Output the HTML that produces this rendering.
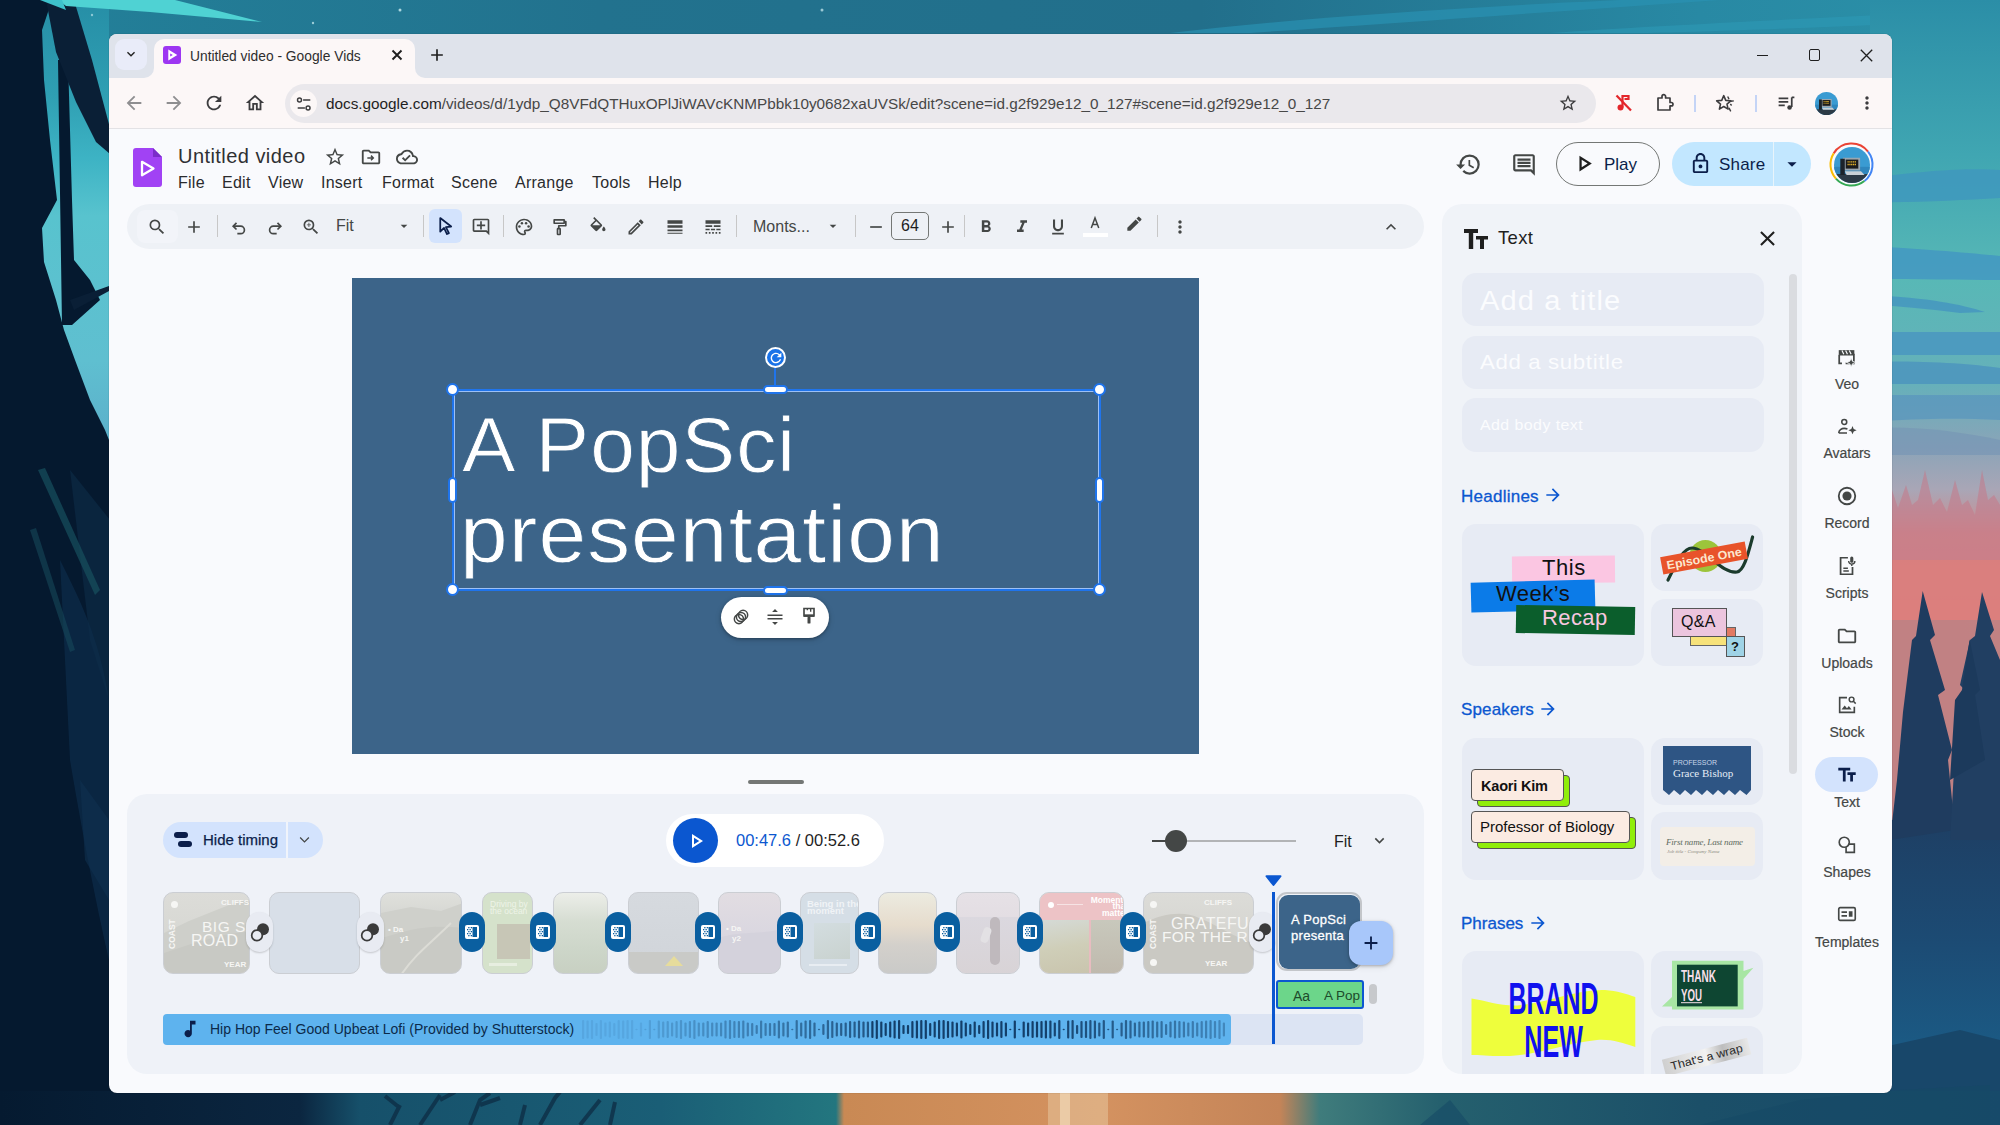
<!DOCTYPE html>
<html><head><meta charset="utf-8">
<style>
*{box-sizing:border-box}
html,body{margin:0;padding:0}
body{width:2000px;height:1125px;overflow:hidden;position:relative;font-family:"Liberation Sans",sans-serif;background:#1c6a86}
.a{position:absolute}
svg.i{position:absolute;overflow:visible}
.t{position:absolute;white-space:nowrap;line-height:1}
</style></head><body>
<!-- WALLPAPER -->
<svg class="a" style="left:0;top:0" width="2000" height="1125" viewBox="0 0 2000 1125">
<defs>
<linearGradient id="topg" x1="0" y1="0" x2="1" y2="0">
<stop offset="0" stop-color="#23819a"/><stop offset="0.3" stop-color="#22728e"/><stop offset="0.6" stop-color="#226f8b"/><stop offset="0.85" stop-color="#2889a4"/><stop offset="1" stop-color="#2b91a8"/>
</linearGradient>
<linearGradient id="lsky" x1="0" y1="0" x2="0" y2="1">
<stop offset="0" stop-color="#268ea6"/><stop offset="0.2" stop-color="#2f9fb3"/><stop offset="0.33" stop-color="#3db3c4"/><stop offset="0.45" stop-color="#58c3ce"/><stop offset="0.75" stop-color="#5fbfd0"/><stop offset="1" stop-color="#5aa8c8"/>
</linearGradient>
<linearGradient id="rlow" x1="0" y1="0" x2="0" y2="1">
<stop offset="0" stop-color="#1e3f64"/><stop offset="0.4" stop-color="#1c4b74"/><stop offset="0.75" stop-color="#1b5a84"/><stop offset="1" stop-color="#195280"/>
</linearGradient>
<linearGradient id="rtop" x1="0" y1="0" x2="0" y2="620" gradientUnits="userSpaceOnUse"><stop offset="0" stop-color="#2b8ea7"/><stop offset="0.25" stop-color="#40a6b2"/><stop offset="0.45" stop-color="#58b8b6"/><stop offset="0.62" stop-color="#66b0ba"/><stop offset="0.72" stop-color="#8aa4b8"/><stop offset="0.79" stop-color="#a9a6b6"/><stop offset="0.86" stop-color="#cf8a8c"/><stop offset="1" stop-color="#dc8080"/></linearGradient>
<linearGradient id="pink" x1="0" y1="0" x2="0" y2="1">
<stop offset="0" stop-color="#7ea1b6"/><stop offset="0.25" stop-color="#a6a0ad"/><stop offset="0.45" stop-color="#d48886"/><stop offset="1" stop-color="#e07f7c"/>
</linearGradient>
<linearGradient id="bot" x1="0" y1="0" x2="1" y2="0">
<stop offset="0" stop-color="#051a30"/><stop offset="0.15" stop-color="#0b2640"/><stop offset="0.18" stop-color="#16506a"/><stop offset="0.33" stop-color="#1a5e76"/><stop offset="0.418" stop-color="#23767f"/>
<stop offset="0.422" stop-color="#c98954"/><stop offset="0.55" stop-color="#d49260"/><stop offset="0.64" stop-color="#c48458"/><stop offset="0.66" stop-color="#3f7c7c"/><stop offset="0.72" stop-color="#25606e"/><stop offset="0.85" stop-color="#1b4f68"/><stop offset="1" stop-color="#174a6a"/>
</linearGradient>
</defs>
<rect width="2000" height="1125" fill="url(#topg)"/>
<!-- left sky + tree -->
<rect x="0" y="0" width="109" height="480" fill="url(#lsky)"/>
<path d="M0 0H52 L42 30 44 80 50 140 57 200 42 228 44 262 56 300 64 330 75 360 90 400 105 430 115 455 V1125 H0z" fill="#05192f"/>
<path d="M58 60 H68 L72 200 74 260 90 280 100 300 72 325 H62z" fill="#05192f"/>
<path d="M46 0 H74 L92 60 110 128 110 154 96 142 76 102 56 52z" fill="#0a1f36"/>
<path d="M70 300 L109 286 109 291 74 310z" fill="#0a1f36"/>
<path d="M70 470 L110 520 L109 700 L90 640z" fill="#0e2d4a" opacity=".6"/>
<path d="M60 560 C80 600,100 640,109 700 L109 960 C95 900,80 820,70 760z" fill="#0d2c4a" opacity=".7"/><path d="M38 470 L45 468 100 590 95 595z" fill="#17505e" opacity=".7"/><path d="M30 530 L36 528 75 650 70 652z" fill="#15485a" opacity=".6"/>
<path d="M80 780 L109 820 L109 900 L85 860z" fill="#0f3150" opacity=".6"/>
<!-- top streak -->
<path d="M58 0 H175 L262 22 L150 12 L66 6z" fill="#4fd2d3"/>
<path d="M40 0 H62 L66 10z" fill="#3ec2cc"/>
<circle cx="400" cy="10" r="1.5" fill="#cfeff3" opacity=".8"/><circle cx="313" cy="23" r="1.2" fill="#cfeff3" opacity=".7"/><circle cx="822" cy="10" r="1.5" fill="#cfeff3" opacity=".7"/><circle cx="92" cy="15" r="1.2" fill="#cfeff3" opacity=".6"/>
<path d="M1170 33 C1300 18,1450 8,1620 0 H1720 C1550 12,1380 24,1250 33z" fill="#2a92b2" opacity=".7"/>
<path d="M1550 33 C1650 26,1780 20,1900 14 L1900 24 C1800 28,1700 32,1640 33z" fill="#2d9ab5" opacity=".6"/>
<!-- right strip -->
<rect x="1870" y="0" width="130" height="620" fill="url(#rtop)"/>
<path d="M1870 178 C1930 170,1970 168,2000 170 V198 C1960 200,1920 203,1870 202z" fill="#3f98bd" opacity=".85"/>
<path d="M1870 246 C1940 250,1980 254,2000 256 V280 C1960 280,1920 279,1870 279z" fill="#4398c2" opacity=".85"/>
<path d="M1870 295 C1930 298,1960 304,1985 312 L1960 313 C1930 309,1900 306,1870 305z" fill="#4597c0" opacity=".85"/>
<path d="M1870 332 H2000 V355 H1870z" fill="#4a96c0" opacity=".85"/>
<path d="M1870 362 C1930 360,1980 365,2000 368 V384 H1870z" fill="#4b94be" opacity=".8"/>
<path d="M1870 395 H2000 V420 C1960 418,1920 418,1870 422z" fill="#5a96be" opacity=".75"/>
<path d="M1870 428 C1920 426,1960 432,2000 440 V455 H1870z" fill="#7494b4" opacity=".6"/>
<path d="M1884 510 L1892 490 1898 508 1906 485 1912 505 1918 500 1925 470 1933 505 1940 498 1947 512 1955 480 1962 505 1968 500 1975 515 1982 470 1988 500 1994 495 2000 505 V600 H1870z" fill="#c47888" opacity=".55"/>
<rect x="1870" y="560" width="130" height="280" fill="#dc7f7c" opacity=".85"/>
<rect x="1870" y="820" width="130" height="305" fill="url(#rlow)"/>
<path d="M1922.7 591 L1935 635 1930 640 1945 690 1938 695 1952 750 1948 760 1955 830 1890 840 1897 780 1903 712 1912 640 1916 636z" fill="#1f3c5f"/>
<path d="M1982 592 L1994 630 1990 636 2000 660 V840 H1950 L1958 700 1965 690 1960 685 1970 640 1975 636z" fill="#213f62"/>
<path d="M1969.6 639.5 L1980 690 1975 695 1985 760 1950 780 1955 700 1962 690z" fill="#1c3a5c"/>
<path d="M1870 1050 L1960 1030 2000 1040 V1125 H1870z" fill="#18476a"/>
<!-- bottom strip -->
<rect x="0" y="1091" width="2000" height="34" fill="url(#bot)"/>
<path d="M390 1125 L400 1105 M420 1125 L440 1095 M400 1108 L385 1096 M440 1100 L455 1092 M470 1125 L480 1100 490 1093 M480 1105 L500 1098 M520 1125 L525 1105 M540 1125 L555 1098 560 1092 M580 1125 L600 1100 M610 1125 L615 1102" stroke="#0e2e46" stroke-width="4" fill="none" opacity=".8"/>
<path d="M1048 1085 H1108 V1125 H1048z" fill="#e6c49c" opacity=".55"/>
<path d="M1060 1085 H1070 V1125 H1060z" fill="#f5e0c0" opacity=".6"/>

<path d="M1420 1125 L1450 1100 1470 1125z M1700 1125 L1800 1100 1900 1090 1990 1085 V1125z" fill="#164a66" opacity=".6"/>
</svg>

<!-- WINDOW FRAME -->
<div class="a" style="left:109px;top:33.5px;width:1783px;height:1059px;border-radius:8px;background:#f9fafd;box-shadow:0 0 1px rgba(0,0,0,.5)"></div>
<!-- tab strip -->
<div class="a" style="left:109px;top:33.5px;width:1783px;height:44.5px;background:#dfe3eb;border-radius:8px 8px 0 0"></div>
<!-- active tab -->
<div class="a" style="left:154px;top:39px;width:261px;height:40px;border-radius:10px 10px 0 0;background:#fcf7f7"></div>
<div class="a" style="left:144px;top:68px;width:10px;height:10px;background:#fcf7f7"></div>
<div class="a" style="left:134px;top:58px;width:20px;height:20px;border-radius:0 0 10px 0;background:#dfe3eb"></div>
<div class="a" style="left:415px;top:68px;width:10px;height:10px;background:#fcf7f7"></div>
<div class="a" style="left:415px;top:58px;width:20px;height:20px;border-radius:0 0 0 10px;background:#dfe3eb"></div>
<div class="a" style="left:115px;top:39px;width:32px;height:31px;border-radius:9px;background:#e9ecf9"></div>
<svg class="i" style="left:123px;top:46px" width="16" height="16" viewBox="0 0 24 24"><path d="M16.59 8.59L12 13.17 7.41 8.59 6 10l6 6 6-6z" fill="#1f1f1f"/></svg>
<div class="a" style="left:163px;top:46px;width:18px;height:18px;border-radius:3px;background:#9d36f2"></div>
<svg class="i" style="left:163px;top:46px" width="18" height="18" viewBox="0 0 18 18"><path d="M5.3 3.6 L14.3 9 L5.3 14.4 Z M7.2 7.4 L7.2 10.6 L9.8 9 Z" fill="#fff" fill-rule="evenodd"/></svg>
<div class="t" style="left:190px;top:50px;font-size:13.8px;color:#2e2e2e">Untitled video - Google Vids</div>
<svg class="i" style="left:391px;top:49px" width="12" height="12" viewBox="0 0 12 12"><path d="M1.5 1.5L10.5 10.5M10.5 1.5L1.5 10.5" stroke="#1f1f1f" stroke-width="1.9"/></svg>
<svg class="i" style="left:427px;top:45px" width="20" height="20" viewBox="0 0 24 24"><path d="M19 13h-6v6h-2v-6H5v-2h6V5h2v6h6v2z" fill="#1f1f1f"/></svg>
<!-- window controls -->
<div class="a" style="left:1757px;top:54.5px;width:11px;height:1.2px;background:#1f1f1f"></div>
<div class="a" style="left:1808.5px;top:49px;width:11.5px;height:11.5px;border:1.3px solid #1f1f1f;border-radius:2px"></div>
<svg class="i" style="left:1859.5px;top:48.5px" width="13" height="13" viewBox="0 0 13 13"><path d="M0.8 0.8L12.2 12.2M12.2 0.8L0.8 12.2" stroke="#1f1f1f" stroke-width="1.3"/></svg>

<!-- toolbar row -->
<div class="a" style="left:109px;top:78px;width:1783px;height:51px;background:#fcf7f7;border-bottom:1px solid #e3e2e5"></div>
<svg class="i" style="left:123px;top:92px" width="22" height="22" viewBox="0 0 24 24"><path d="M20 11H7.83l5.59-5.59L12 4l-8 8 8 8 1.41-1.41L7.83 13H20v-2z" fill="#8e8e90"/></svg>
<svg class="i" style="left:163px;top:92px" width="22" height="22" viewBox="0 0 24 24"><path d="M12 4l-1.41 1.41L16.17 11H4v2h12.17l-5.58 5.59L12 20l8-8z" fill="#8e8e90"/></svg>
<svg class="i" style="left:203px;top:92px" width="22" height="22" viewBox="0 0 24 24"><path d="M17.65 6.35A7.958 7.958 0 0 0 12 4c-4.42 0-7.99 3.58-7.99 8s3.57 8 7.99 8c3.73 0 6.84-2.55 7.73-6h-2.08A5.99 5.99 0 0 1 12 18c-3.310 0-6-2.69-6-6s2.69-6 6-6c1.66 0 3.14.69 4.22 1.78L13 11h7V4l-2.35 2.35z" fill="#3c3c3e"/></svg>
<svg class="i" style="left:244px;top:92px" width="22" height="22" viewBox="0 0 24 24"><path d="M12 5.69l5 4.5V18h-2v-6H9v6H7v-7.81l5-4.5M12 3L2 12h3v8h6v-6h2v6h6v-8h3L12 3z" fill="#3c3c3e"/></svg>
<div class="a" style="left:285px;top:84px;width:1311px;height:39px;border-radius:20px;background:#eae8ec"></div>
<div class="a" style="left:290px;top:90px;width:27px;height:27px;border-radius:14px;background:#fcf7f7"></div>
<svg class="i" style="left:294.5px;top:94.5px" width="18" height="18" viewBox="0 0 20 20"><circle cx="5" cy="5.5" r="2.2" fill="none" stroke="#3c3c3e" stroke-width="1.6"/><path d="M9 5.5h8M3 14.5h8" stroke="#3c3c3e" stroke-width="1.6"/><circle cx="14.5" cy="14.5" r="2.2" fill="none" stroke="#3c3c3e" stroke-width="1.6"/></svg>
<div class="t" style="left:326px;top:96px;font-size:15.3px;color:#1f1f1f">docs.google.com<span style="color:#474747">/videos/d/1ydp_Q8VFdQTHuxOPlJiWAVcKNMPbbk10y0682xaUVSk/edit?scene=id.g2f929e12_0_127#scene=id.g2f929e12_0_127</span></div>
<svg class="i" style="left:1558px;top:93px" width="20" height="20" viewBox="0 0 24 24"><path d="M22 9.24l-7.19-.62L12 2 9.19 8.63 2 9.24l5.46 4.73L5.82 21 12 17.27 18.18 21l-1.63-7.03L22 9.24zM12 15.4l-3.76 2.27 1-4.28-3.32-2.88 4.38-.38L12 6.1l1.71 4.04 4.38.38-3.32 2.88 1 4.28L12 15.4z" fill="#3c3c3e"/></svg>
<svg class="i" style="left:1614px;top:93px" width="20" height="20" viewBox="0 0 20 20"><circle cx="6.5" cy="14.5" r="3" fill="#e3262b"/><path d="M8.5 14.5V3h6v3h-4" stroke="#e3262b" stroke-width="2.2" fill="none"/><path d="M2.5 2.5L17 17.5" stroke="#e3262b" stroke-width="2.2"/></svg>
<svg class="i" style="left:1655px;top:93px" width="20" height="20" viewBox="0 0 20 20"><path d="M3 5h4V3.5a1.8 1.8 0 0 1 3.6 0V5H15v4.5h1.3a1.7 1.7 0 0 1 0 3.4H15V17H3z" fill="none" stroke="#3c3c3e" stroke-width="1.7" stroke-linejoin="round"/></svg>
<div class="a" style="left:1694px;top:95px;width:1.5px;height:17px;background:#c4d4f6"></div>
<svg class="i" style="left:1715px;top:93px" width="21" height="21" viewBox="0 0 24 24"><path d="M10 3l2.3 5.4 5.8.5-4.4 3.8 1.3 5.7-5-3-5 3 1.3-5.7L1.9 8.9l5.8-.5z" fill="none" stroke="#3c3c3e" stroke-width="1.8" stroke-linejoin="round"/><path d="M17.5 12.5l1.5 1.8M16 17l2 4M14.5 4l1.5 3M18 9.5l3.5-.5" stroke="#3c3c3e" stroke-width="1.6"/></svg>
<div class="a" style="left:1755px;top:95px;width:1.5px;height:17px;background:#c4d4f6"></div>
<svg class="i" style="left:1776px;top:93px" width="21" height="21" viewBox="0 0 24 24"><path d="M3 6h11M3 10h11M3 14h7" stroke="#3c3c3e" stroke-width="2"/><path d="M18 5v11" stroke="#3c3c3e" stroke-width="2"/><circle cx="15.5" cy="16.5" r="2.6" fill="#3c3c3e"/><path d="M18 5h3" stroke="#3c3c3e" stroke-width="2"/></svg>
<svg class="i" style="left:1815px;top:92px" width="23" height="23" viewBox="0 0 40 40"><defs><clipPath id="avc1815"><circle cx="20" cy="20" r="20"/></clipPath></defs><g clip-path="url(#avc1815)"><rect width="40" height="40" fill="#3a9bd2"/><rect y="22" width="40" height="8" fill="#2f86bd"/><path d="M0 30 H40 V40 H0z" fill="#2c3a46"/><path d="M10 12 H29 V26 H10z" fill="#9aa6b0"/><path d="M7 13 H12 V31 H7z" fill="#1c232a"/><rect x="13" y="14" width="14" height="10" fill="#1b1b1b"/><path d="M15 16.5h10M15 19.5h10" stroke="#e8b52a" stroke-width="1.6" stroke-dasharray="1.4 0.6"/><path d="M12 27 L30 27 34 31 14 31z" fill="#c9d0d6"/></g></svg>
<svg class="i" style="left:1857px;top:93px" width="20" height="20" viewBox="0 0 24 24"><path d="M12 8c1.1 0 2-.9 2-2s-.9-2-2-2-2 .9-2 2 .9 2 2 2zm0 2c-1.1 0-2 .9-2 2s.9 2 2 2 2-.9 2-2-.9-2-2-2zm0 6c-1.1 0-2 .9-2 2s.9 2 2 2 2-.9 2-2-.9-2-2-2z" fill="#3c3c3e"/></svg>

<!-- APP HEADER -->
<svg class="i" style="left:133px;top:148px" width="29" height="39" viewBox="0 0 29 39"><path d="M3 0H20L29 9V36a3 3 0 0 1-3 3H3a3 3 0 0 1-3-3V3a3 3 0 0 1 3-3z" fill="#a142f4"/><path d="M20 0L29 9H20z" fill="#7b2cc9"/><path d="M9 13.8L20.5 20.5 9 27.2z" fill="none" stroke="#fff" stroke-width="2.3" stroke-linejoin="round"/></svg>
<div class="t" style="left:178px;top:146px;font-size:20px;letter-spacing:0.45px;color:#2f3033">Untitled video</div>
<svg class="i" style="left:324px;top:146px" width="22" height="22" viewBox="0 0 24 24"><path d="M22 9.24l-7.19-.62L12 2 9.19 8.63 2 9.24l5.46 4.73L5.82 21 12 17.27 18.18 21l-1.63-7.03L22 9.24zM12 15.4l-3.76 2.27 1-4.28-3.32-2.88 4.38-.38L12 6.1l1.71 4.04 4.38.38-3.32 2.88 1 4.28L12 15.4z" fill="#444746"/></svg>
<svg class="i" style="left:360px;top:146px" width="22" height="22" viewBox="0 0 24 24"><path d="M20 6h-8l-2-2H4c-1.1 0-1.99.9-1.99 2L2 18c0 1.1.9 2 2 2h16c1.1 0 2-.9 2-2V8c0-1.1-.9-2-2-2zm0 12H4V6h5.17l2 2H20v10z" fill="#444746"/><path d="M8 13h6M12 10.5l2.5 2.5-2.5 2.5" stroke="#444746" stroke-width="1.6" fill="none"/></svg>
<svg class="i" style="left:395px;top:146px" width="24" height="22" viewBox="0 0 24 24"><path d="M19.35 10.04A7.49 7.49 0 0 0 12 4C9.11 4 6.6 5.64 5.35 8.04A5.994 5.994 0 0 0 0 14c0 3.31 2.69 6 6 6h13c2.76 0 5-2.240 5-5 0-2.64-2.05-4.78-4.65-4.96zM19 18H6c-2.21 0-4-1.79-4-4 0-2.05 1.53-3.76 3.56-3.97l1.07-.11.5-.95A5.469 5.469 0 0 1 12 6c2.62 0 4.88 1.86 5.39 4.43l.3 1.5 1.53.11A2.98 2.98 0 0 1 22 15c0 1.65-1.35 3-3 3zm-9-3.82l-2.09-2.09L6.5 13.5 10 17l6.01-6.01-1.41-1.41z" fill="#444746"/></svg>
<div class="t" style="left:178px;top:175px;font-size:16px;letter-spacing:0.25px;color:#2a2b2d">File</div>
<div class="t" style="left:222px;top:175px;font-size:16px;letter-spacing:0.25px;color:#2a2b2d">Edit</div>
<div class="t" style="left:268px;top:175px;font-size:16px;letter-spacing:0.25px;color:#2a2b2d">View</div>
<div class="t" style="left:321px;top:175px;font-size:16px;letter-spacing:0.25px;color:#2a2b2d">Insert</div>
<div class="t" style="left:382px;top:175px;font-size:16px;letter-spacing:0.25px;color:#2a2b2d">Format</div>
<div class="t" style="left:451px;top:175px;font-size:16px;letter-spacing:0.25px;color:#2a2b2d">Scene</div>
<div class="t" style="left:515px;top:175px;font-size:16px;letter-spacing:0.25px;color:#2a2b2d">Arrange</div>
<div class="t" style="left:592px;top:175px;font-size:16px;letter-spacing:0.25px;color:#2a2b2d">Tools</div>
<div class="t" style="left:648px;top:175px;font-size:16px;letter-spacing:0.25px;color:#2a2b2d">Help</div>


<!-- TOOLBAR -->
<div class="a" style="left:127px;top:204px;width:1297px;height:45px;border-radius:23px;background:#eef1f6"></div>
<div class="a" style="left:137px;top:210px;width:41px;height:33px;border-radius:8px;background:#f2f4f9"></div>
<svg class="i" style="left:147px;top:217px" width="20" height="20" viewBox="0 0 24 24"><path d="M15.5 14h-.79l-.28-.27A6.471 6.471 0 0 0 16 9.5 6.5 6.5 0 1 0 9.5 16c1.61 0 3.09-.59 4.23-1.57l.27.28v.79l5 4.99L20.49 19l-4.99-5zm-6 0C7.01 14 5 11.99 5 9.5S7.01 5 9.5 5 14 7.01 14 9.5 11.99 14 9.5 14z" fill="#444746"/></svg>
<svg class="i" style="left:184px;top:217px" width="20" height="20" viewBox="0 0 24 24"><path d="M19 13h-6v6h-2v-6H5v-2h6V5h2v6h6v2z" fill="#444746"/></svg>
<div class="a" style="left:217px;top:215px;width:1px;height:22px;background:#c7c7c7"></div>
<svg class="i" style="left:229px;top:217px" width="20" height="20" viewBox="0 0 24 24"><path d="M9 7L5 11l4 4" fill="none" stroke="#444746" stroke-width="2"/><path d="M5 11h9a4.5 4.5 0 0 1 0 9H10" fill="none" stroke="#444746" stroke-width="2"/></svg>
<svg class="i" style="left:265px;top:217px" width="20" height="20" viewBox="0 0 24 24"><path d="M15 7l4 4-4 4" fill="none" stroke="#444746" stroke-width="2"/><path d="M19 11h-9a4.5 4.5 0 0 0 0 9h4" fill="none" stroke="#444746" stroke-width="2"/></svg>
<svg class="i" style="left:301px;top:217px" width="20" height="20" viewBox="0 0 24 24"><path d="M15.5 14h-.79l-.28-.27A6.471 6.471 0 0 0 16 9.5 6.5 6.5 0 1 0 9.5 16c1.61 0 3.09-.59 4.23-1.57l.27.28v.79l5 4.99L20.49 19l-4.99-5zm-6 0C7.01 14 5 11.99 5 9.5S7.01 5 9.5 5 14 7.01 14 9.5 11.99 14 9.5 14zm.5-7H9v2H7v1h2v2h1v-2h2V9h-2z" fill="#444746"/></svg>
<div class="t" style="left:336px;top:218px;font-size:16px;color:#444746">Fit</div>
<svg class="i" style="left:396px;top:218px" width="16" height="16" viewBox="0 0 24 24"><path d="M7 10l5 5 5-5z" fill="#444746"/></svg>
<div class="a" style="left:423px;top:215px;width:1px;height:22px;background:#c7c7c7"></div>
<div class="a" style="left:429px;top:209px;width:33px;height:34px;border-radius:6px;background:#d3e3fd"></div>
<svg class="i" style="left:435px;top:215px" width="21" height="21" viewBox="0 0 24 24"><path d="M6 3.5L18.5 13.2l-6 .6 3.4 6.9-2.2 1.1-3.4-7L6 19z" fill="none" stroke="#0b1e4a" stroke-width="2" stroke-linejoin="round"/></svg>
<svg class="i" style="left:471px;top:217px" width="20" height="20" viewBox="0 0 24 24"><path d="M22 4c0-1.1-.9-2-2-2H4c-1.1 0-2 .9-2 2v12c0 1.1.9 2 2 2h14l4 4V4zm-2 13.17L18.83 16H4V4h16v13.17zM13 5h-2v4H7v2h4v4h2v-4h4V9h-4z" fill="#444746"/></svg>
<div class="a" style="left:503px;top:215px;width:1px;height:22px;background:#c7c7c7"></div>
<svg class="i" style="left:514px;top:217px" width="20" height="20" viewBox="0 0 24 24"><path d="M12 22C6.49 22 2 17.51 2 12S6.49 2 12 2s10 4.04 10 9c0 3.31-2.69 6-6 6h-1.77c-.28 0-.5.22-.5.5 0 .12.05.23.13.33.41.47.64 1.06.64 1.67A2.5 2.5 0 0 1 12 22zm0-18c-4.41 0-8 3.59-8 8s3.59 8 8 8c.28 0 .5-.22.5-.5a.54.54 0 0 0-.14-.35c-.41-.46-.63-1.05-.63-1.65a2.5 2.5 0 0 1 2.5-2.5H16c2.21 0 4-1.79 4-4 0-3.86-3.59-7-8-7z" fill="#444746"/><circle cx="6.5" cy="11.5" r="1.5" fill="#444746"/><circle cx="9.5" cy="7.5" r="1.5" fill="#444746"/><circle cx="14.5" cy="7.5" r="1.5" fill="#444746"/><circle cx="17.5" cy="11.5" r="1.5" fill="#444746"/></svg>
<svg class="i" style="left:550px;top:217px" width="20" height="20" viewBox="0 0 24 24"><path d="M5 3.5h12v4H5z M17 5.5h2v5h-8.5v3" fill="none" stroke="#444746" stroke-width="2" stroke-linejoin="round"/><rect x="9" y="14" width="3.2" height="7" rx="0.6" fill="none" stroke="#444746" stroke-width="2"/></svg>
<svg class="i" style="left:588px;top:217px" width="20" height="20" viewBox="0 0 24 24"><path d="M16.56 8.94L7.62 0 6.21 1.41l2.38 2.38-5.15 5.15a1.49 1.49 0 0 0 0 2.12l5.5 5.5c.29.29.68.44 1.06.44s.77-.15 1.06-.44l5.5-5.5c.59-.58.590-1.53 0-2.12zM5.21 10L10 5.21 14.79 10H5.21zM19 11.5s-2 2.17-2 3.5c0 1.1.9 2 2 2s2-.9 2-2c0-1.33-2-3.5-2-3.5z" fill="#444746"/></svg>
<svg class="i" style="left:626px;top:217px" width="20" height="20" viewBox="0 0 24 24"><path d="M14.06 9.02l.92.92L5.92 19H5v-.92l9.06-9.06M17.66 3c-.25 0-.51.1-.7.29l-1.83 1.83 3.75 3.75 1.83-1.83a.996.996 0 0 0 0-1.41l-2.34-2.34c-.2-.2-.45-.29-.71-.29zm-3.6 3.19L3 17.25V21h3.75L17.81 9.94l-3.75-3.75z" fill="#444746"/></svg>
<svg class="i" style="left:665px;top:217px" width="20" height="20" viewBox="0 0 24 24"><path d="M3 17h18v-2H3v2zm0 3h18v-1H3v1zm0-7h18v-3H3v3zm0-9v4h18V4H3z" fill="#444746"/></svg>
<svg class="i" style="left:703px;top:217px" width="20" height="20" viewBox="0 0 24 24"><path d="M3 16h5v-2H3v2zm6.5 0h5v-2h-5v2zm6.5 0h5v-2h-5v2zM3 20h2v-2H3v2zm4 0h2v-2H7v2zm4 0h2v-2h-2v2zm4 0h2v-2h-2v2zm4 0h2v-2h-2v2zM3 12h8v-2H3v2zm10 0h8v-2h-8v2zM3 4v4h18V4H3z" fill="#444746"/></svg>
<div class="a" style="left:736px;top:215px;width:1px;height:22px;background:#c7c7c7"></div>
<div class="t" style="left:753px;top:219px;font-size:16px;color:#444746">Monts...</div>
<svg class="i" style="left:825px;top:218px" width="16" height="16" viewBox="0 0 24 24"><path d="M7 10l5 5 5-5z" fill="#444746"/></svg>
<div class="a" style="left:855px;top:215px;width:1px;height:22px;background:#c7c7c7"></div>
<svg class="i" style="left:866px;top:217px" width="20" height="20" viewBox="0 0 24 24"><path d="M19 13H5v-2h14v2z" fill="#444746"/></svg>
<div class="a" style="left:891px;top:212px;width:38px;height:28px;border-radius:5px;border:1px solid #747775"></div>
<div class="t" style="left:891px;top:218px;width:38px;text-align:center;font-size:16px;color:#1f1f1f">64</div>
<svg class="i" style="left:938px;top:217px" width="20" height="20" viewBox="0 0 24 24"><path d="M19 13h-6v6h-2v-6H5v-2h6V5h2v6h6v2z" fill="#444746"/></svg>
<div class="a" style="left:964px;top:215px;width:1px;height:22px;background:#c7c7c7"></div>
<svg class="i" style="left:976px;top:217px" width="20" height="20" viewBox="0 0 24 24"><path d="M15.6 10.79c.97-.67 1.65-1.77 1.65-2.79 0-2.26-1.75-4-4-4H7v14h7.04c2.09 0 3.71-1.7 3.71-3.79 0-1.52-.86-2.82-2.15-3.42zM10 6.5h3c.83 0 1.5.67 1.5 1.5s-.67 1.5-1.5 1.5h-3v-3zm3.5 9H10v-3h3.5c.83 0 1.5.67 1.5 1.5s-.67 1.5-1.5 1.5z" fill="#444746"/></svg>
<svg class="i" style="left:1012px;top:217px" width="20" height="20" viewBox="0 0 24 24"><path d="M10 4v3h2.21l-3.42 8H6v3h8v-3h-2.21l3.42-8H18V4z" fill="#444746"/></svg>
<svg class="i" style="left:1048px;top:217px" width="20" height="20" viewBox="0 0 24 24"><path d="M12 17c3.31 0 6-2.69 6-6V3h-2.5v8c0 1.93-1.57 3.5-3.5 3.5S8.5 12.93 8.5 11V3H6v8c0 3.31 2.69 6 6 6zm-7 2v2h14v-2H5z" fill="#444746"/></svg>
<svg class="i" style="left:1085px;top:215px" width="20" height="20" viewBox="0 0 24 24"><path d="M7.5 15.5L12 3.5l4.5 12M9 11.5h6" fill="none" stroke="#444746" stroke-width="1.8"/></svg>
<div class="a" style="left:1083px;top:233px;width:25px;height:4px;background:#ffffff"></div>
<svg class="i" style="left:1124px;top:215px" width="20" height="20" viewBox="0 0 24 24"><path d="M17.75 7L14 3.25l-10 10V17h3.75l10-10zm2.96-2.96a.996.996 0 0 0 0-1.41L18.37.29a.996.996 0 0 0-1.41 0L15 2.25 18.75 6l1.96-1.96z" fill="#444746" transform="translate(0,2)"/></svg>
<div class="a" style="left:1157px;top:215px;width:1px;height:22px;background:#c7c7c7"></div>
<svg class="i" style="left:1170px;top:217px" width="20" height="20" viewBox="0 0 24 24"><path d="M12 8c1.1 0 2-.9 2-2s-.9-2-2-2-2 .9-2 2 .9 2 2 2zm0 2c-1.1 0-2 .9-2 2s.9 2 2 2 2-.9 2-2-.9-2-2-2zm0 6c-1.1 0-2 .9-2 2s.9 2 2 2 2-.9 2-2-.9-2-2-2z" fill="#444746"/></svg>
<svg class="i" style="left:1381px;top:217px" width="20" height="20" viewBox="0 0 24 24"><path d="M12 8l-6 6 1.41 1.41L12 10.83l4.59 4.58L18 14z" fill="#444746"/></svg>

<!-- HEADER RIGHT -->
<svg class="i" style="left:1455px;top:151px" width="27" height="27" viewBox="0 0 24 24"><path d="M13 3a9 9 0 0 0-9 9H1l3.89 3.89.07.14L9 12H6c0-3.87 3.13-7 7-7s7 3.13 7 7-3.13 7-7 7c-1.93 0-3.68-.79-4.94-2.06l-1.42 1.42A8.954 8.954 0 0 0 13 21a9 9 0 0 0 0-18zm-1 5v5l4.28 2.54.72-1.21-3.5-2.08V8H12z" fill="#444746"/></svg>
<svg class="i" style="left:1511px;top:152px" width="26" height="26" viewBox="0 0 24 24"><path d="M21.99 4c0-1.1-.89-2-1.99-2H4c-1.1 0-2 .9-2 2v12c0 1.1.9 2 2 2h14l4 4-.01-18zM20 4v13.17L18.83 16H4V4h16zM6 12h12v2H6zm0-3h12v2H6zm0-3h12v2H6z" fill="#444746"/></svg>
<div class="a" style="left:1556px;top:142px;width:104px;height:44px;border-radius:22px;border:1px solid #747775"></div>
<svg class="i" style="left:1571px;top:150px" width="27" height="27" viewBox="0 0 24 24"><path d="M10 8.64L15.27 12 10 15.36V8.64M8 5v14l11-7L8 5z" fill="#1f1f1f" transform="translate(-0.5,0)"/></svg>
<div class="t" style="left:1604px;top:156px;font-size:17px;color:#0b1e4a">Play</div>
<div class="a" style="left:1672px;top:142px;width:139px;height:44px;border-radius:22px;background:#c2e7ff"></div>
<div class="a" style="left:1773px;top:142px;width:1px;height:44px;background:#e8f4fb"></div>
<svg class="i" style="left:1689px;top:152px" width="23" height="23" viewBox="0 0 24 24"><path d="M18 8h-1V6c0-2.76-2.24-5-5-5S7 3.24 7 6v2H6c-1.1 0-2 .9-2 2v10c0 1.1.9 2 2 2h12c1.1 0 2-.9 2-2V10c0-1.1-.9-2-2-2zM9 6c0-1.66 1.34-3 3-3s3 1.34 3 3v2H9V6zm9 14H6V10h12v10zm-6-3c1.1 0 2-.9 2-2s-.9-2-2-2-2 .9-2 2 .9 2 2 2z" fill="#0b1e4a"/></svg>
<div class="t" style="left:1719px;top:156px;font-size:17px;letter-spacing:0.2px;color:#0b1e4a">Share</div>
<svg class="i" style="left:1781px;top:153px" width="22" height="22" viewBox="0 0 24 24"><path d="M7 10l5 5 5-5z" fill="#0b1e4a"/></svg>
<svg class="i" style="left:1829px;top:142px" width="45" height="45" viewBox="0 0 45 45"><g fill="none" stroke-width="2"><path d="M4.69 11.37 A21 21 0 0 1 39.05 9.57" stroke="#ea4335"/><path d="M39.05 9.57 A21 21 0 0 1 35.43 39.05" stroke="#4285f4"/><path d="M35.43 39.05 A21 21 0 0 1 6.89 36.55" stroke="#34a853"/><path d="M6.89 36.55 A21 21 0 0 1 4.69 11.37" stroke="#fbbc04"/></g></svg>
<svg class="i" style="left:1834px;top:146.5px" width="36" height="36" viewBox="0 0 40 40"><defs><clipPath id="avc1833"><circle cx="20" cy="20" r="20"/></clipPath></defs><g clip-path="url(#avc1833)"><rect width="40" height="40" fill="#3a9bd2"/><rect y="22" width="40" height="8" fill="#2f86bd"/><path d="M0 30 H40 V40 H0z" fill="#2c3a46"/><path d="M10 12 H29 V26 H10z" fill="#9aa6b0"/><path d="M7 13 H12 V31 H7z" fill="#1c232a"/><rect x="13" y="14" width="14" height="10" fill="#1b1b1b"/><path d="M15 16.5h10M15 19.5h10" stroke="#e8b52a" stroke-width="1.6" stroke-dasharray="1.4 0.6"/><path d="M12 27 L30 27 34 31 14 31z" fill="#c9d0d6"/></g></svg>

<!-- CANVAS -->
<div class="a" style="left:352px;top:278px;width:847px;height:476px;background:#3c6489"></div>
<div class="t" style="left:462px;top:407px;font-size:77px;color:#fff;letter-spacing:1px;transform:scaleX(1.043);transform-origin:0 0;-webkit-text-stroke:0.8px #3c6489">A PopSci</div>
<div class="t" style="left:460px;top:494px;font-size:81px;color:#fff;letter-spacing:1px;transform:scaleX(1.059);transform-origin:0 0;-webkit-text-stroke:0.8px #3c6489">presentation</div>
<div class="a" style="left:451.5px;top:389px;width:649px;height:202px;border:2px solid #1f74ec;box-shadow:inset 0 0 0 1px #9cc0f6"></div>
<div class="a" style="left:774px;top:367px;width:2px;height:22px;background:#1f74ec"></div>
<div class="a" style="left:765px;top:347px;width:21px;height:21px;border-radius:50%;background:#1a73e8;border:2px solid #fff"></div>
<svg class="i" style="left:767.5px;top:349.5px" width="16" height="16" viewBox="0 0 24 24"><path d="M17.65 6.35A7.958 7.958 0 0 0 12 4c-4.42 0-7.99 3.58-7.99 8s3.57 8 7.99 8c3.73 0 6.84-2.55 7.730-6h-2.08A5.99 5.99 0 0 1 12 18c-3.31 0-6-2.69-6-6s2.69-6 6-6c1.66 0 3.14.69 4.22 1.78L13 11h7V4l-2.35 2.35z" fill="#fff"/></svg>
<div class="a" style="left:446px;top:383px;width:13px;height:13px;border-radius:50%;background:#fff;border:2.2px solid #1f74ec"></div>
<div class="a" style="left:1093px;top:383px;width:13px;height:13px;border-radius:50%;background:#fff;border:2.2px solid #1f74ec"></div>
<div class="a" style="left:446px;top:583px;width:13px;height:13px;border-radius:50%;background:#fff;border:2.2px solid #1f74ec"></div>
<div class="a" style="left:1093px;top:583px;width:13px;height:13px;border-radius:50%;background:#fff;border:2.2px solid #1f74ec"></div>
<div class="a" style="left:763px;top:385px;width:25px;height:9px;border-radius:4.5px;background:#fff;border:2.2px solid #1f74ec"></div>
<div class="a" style="left:763px;top:585.5px;width:25px;height:9px;border-radius:4.5px;background:#fff;border:2.2px solid #1f74ec"></div>
<div class="a" style="left:447.5px;top:477px;width:9px;height:26px;border-radius:4.5px;background:#fff;border:2.2px solid #1f74ec"></div>
<div class="a" style="left:1095px;top:477px;width:9px;height:26px;border-radius:4.5px;background:#fff;border:2.2px solid #1f74ec"></div>
<div class="a" style="left:721px;top:597px;width:108px;height:41px;border-radius:21px;background:#fff;box-shadow:0 1px 3px rgba(0,0,0,.3),0 2px 6px rgba(0,0,0,.15)"></div>
<svg class="i" style="left:731px;top:607px" width="20" height="20" viewBox="0 0 24 24"><circle cx="9.5" cy="14.5" r="5.5" fill="none" stroke="#444746" stroke-width="1.8"/><circle cx="14.5" cy="9.5" r="5.5" fill="none" stroke="#444746" stroke-width="1.8"/><circle cx="12" cy="12" r="5.5" fill="none" stroke="#444746" stroke-width="1.8"/></svg>
<svg class="i" style="left:765px;top:606px" width="20" height="22" viewBox="0 0 24 26"><path d="M3 11h18M3 15h18" stroke="#444746" stroke-width="1.8"/><path d="M8.5 7L12 3.5 15.5 7zM8.5 19L12 22.5 15.5 19z" fill="#444746"/></svg>
<svg class="i" style="left:799px;top:606px" width="20" height="20" viewBox="0 0 24 24"><path d="M6 3h12v9H6z" fill="none" stroke="#444746" stroke-width="2"/><path d="M6 10h12v3H6z" fill="#444746"/><rect x="10.2" y="13" width="3.6" height="8" rx="1" fill="#444746"/><path d="M14 3v4M10 3v2" stroke="#444746" stroke-width="1.6"/></svg>
<div class="a" style="left:748px;top:780px;width:56px;height:4px;border-radius:2px;background:#747775"></div>

<!-- TIMELINE -->
<div class="a" style="left:127px;top:794px;width:1297px;height:280px;border-radius:20px;background:#eff2f8"></div>
<div class="a" style="left:163px;top:822px;width:160px;height:36px;border-radius:18px;background:#d3e3fd"></div>
<div class="a" style="left:286px;top:822px;width:1.5px;height:36px;background:#f0f4fb"></div>
<svg class="i" style="left:173px;top:830px" width="21" height="20" viewBox="0 0 21 20"><rect x="1" y="2" width="14" height="6" rx="3" fill="#0b1e4a"/><rect x="5" y="11" width="14" height="6" rx="3" fill="#0b1e4a"/></svg>
<div class="t" style="left:203px;top:832px;font-size:15px;color:#0b1e4a;-webkit-text-stroke:0.25px #0b1e4a">Hide timing</div>
<svg class="i" style="left:295px;top:830px" width="19" height="19" viewBox="0 0 24 24"><path d="M6.5 9.5l5.5 5.5 5.5-5.5" fill="none" stroke="#444746" stroke-width="1.6"/></svg>
<div class="a" style="left:666px;top:814px;width:218px;height:53px;border-radius:27px;background:#fff"></div>
<div class="a" style="left:673px;top:818px;width:45px;height:45px;border-radius:50%;background:#0b57d0"></div>
<svg class="i" style="left:684px;top:829px" width="24" height="24" viewBox="0 0 24 24"><path d="M10 8.64L15.27 12 10 15.36V8.64M8 5v14l11-7L8 5z" fill="#fff"/></svg>
<div class="t" style="left:736px;top:832px;font-size:16.5px;color:#0b57d0">00:47.6<span style="color:#1f1f1f"> / 00:52.6</span></div>
<div class="a" style="left:1152px;top:840px;width:144px;height:2px;background:#b2b4b6"></div>
<div class="a" style="left:1152px;top:839.5px;width:24px;height:2.5px;background:#444746"></div>
<div class="a" style="left:1165px;top:830px;width:22px;height:22px;border-radius:50%;background:#444746"></div>
<div class="t" style="left:1334px;top:834px;font-size:16px;color:#1f1f1f">Fit</div>
<svg class="i" style="left:1370px;top:831px" width="19" height="19" viewBox="0 0 24 24"><path d="M16.59 8.59L12 13.17 7.41 8.59 6 10l6 6 6-6z" fill="#444746"/></svg>

<!-- CLIPS -->
<div class="a" style="left:163px;top:891.5px;width:87px;height:82px;border-radius:10px;background:linear-gradient(180deg,#dcdcd8,#d3d4cf);border:1.5px solid #cbced3;overflow:hidden"><svg class="i" style="left:0;top:0" width="87" height="82"><path d="M0 40 L25 28 50 18 70 10 87 6 V82 H0z" fill="#cecfca"/><path d="M0 60 L30 50 60 42 87 38 V82 H0z" fill="#c8c9c4"/></svg><div class="a" style="left:7px;top:8px;width:7px;height:7px;border-radius:50%;background:#f6f6f4"></div><div class="t" style="left:57px;top:6px;font-size:8px;font-weight:bold;color:#f6f6f4">CLIFFS</div><div class="t" style="left:60px;top:68px;font-size:8px;font-weight:bold;color:#f6f6f4">YEAR</div><div class="t" style="left:38px;top:26px;font-size:15.5px;letter-spacing:0.5px;color:#f6f6f4">BIG S</div><div class="t" style="left:27px;top:40.5px;font-size:16px;letter-spacing:0.3px;color:#f6f6f4">ROAD</div><div class="t" style="left:4px;top:56px;font-size:8.5px;font-weight:bold;color:#f6f6f4;transform:rotate(-90deg);transform-origin:0 0">COAST</div></div>
<div class="a" style="left:269px;top:891.5px;width:91px;height:82px;border-radius:10px;background:#d8dfe8;border:1.5px solid #cbced3;overflow:hidden"></div>
<div class="a" style="left:380px;top:891.5px;width:82px;height:82px;border-radius:10px;background:linear-gradient(180deg,#dfe0dc,#d2d3ce 40%,#c9cac4);border:1.5px solid #cbced3;overflow:hidden"><svg class="i" style="left:0;top:0" width="82" height="82"><path d="M0 20 L30 14 60 18 82 10 V82 H0z" fill="#cfd0cb"/><path d="M0 45 C20 40,40 30,82 35 V82 H0z" fill="#c9cac5"/><path d="M20 82 C35 60,50 50,70 30" stroke="#dcdcd6" stroke-width="2" fill="none"/></svg><div class="t" style="left:7px;top:33px;font-size:8px;font-weight:bold;color:#f6f6f4">• Da</div><div class="t" style="left:19px;top:42px;font-size:8px;font-weight:bold;color:#f6f6f4">y1</div></div>
<div class="a" style="left:482px;top:891.5px;width:51px;height:82px;border-radius:10px;background:#d5e2cb;border:1.5px solid #cbced3;overflow:hidden"><div class="t" style="left:7px;top:8px;font-size:8.5px;line-height:7px;color:#eef4e8;white-space:normal;width:44px">Driving by the ocean</div><div class="a" style="left:14px;top:31px;width:33px;height:35px;background:#c7c6b6"></div><div class="a" style="left:6px;top:70px;width:28px;height:3px;background:#eef4e8;opacity:.7"></div></div>
<div class="a" style="left:553px;top:891.5px;width:55px;height:82px;border-radius:10px;background:linear-gradient(180deg,#eceee9,#d6ddd2 35%,#cdd6c9 70%,#c8d0c2);border:1.5px solid #cbced3;overflow:hidden"></div>
<div class="a" style="left:628px;top:891.5px;width:71px;height:82px;border-radius:10px;background:linear-gradient(180deg,#d6dadf,#d0d4d9);border:1.5px solid #cbced3;overflow:hidden"><div class="a" style="left:0;top:59px;width:71px;height:23px;background:#c9cac7"></div><div class="a" style="left:36px;top:63px;width:0;height:0;border-left:9px solid transparent;border-right:9px solid transparent;border-bottom:10px solid #e6dc9c"></div></div>
<div class="a" style="left:718px;top:891.5px;width:63px;height:82px;border-radius:10px;background:linear-gradient(180deg,#e2dde2,#dad7e0 50%,#d3d2dc);border:1.5px solid #cbced3;overflow:hidden"><svg class="i" style="left:0;top:0" width="63" height="82"><path d="M0 45 C20 38,40 42,63 36 V82 H0z" fill="#d4d2dc"/></svg><div class="t" style="left:7px;top:32px;font-size:8px;font-weight:bold;color:#f6f6f4">• Da</div><div class="t" style="left:13px;top:42px;font-size:8px;font-weight:bold;color:#f6f6f4">y2</div></div>
<div class="a" style="left:800px;top:891.5px;width:59px;height:82px;border-radius:10px;background:#d5dee6;border:1.5px solid #cbced3;overflow:hidden"><div class="t" style="left:6px;top:7px;font-size:9.5px;line-height:7.5px;color:#f0f3f6;white-space:normal;width:56px;font-weight:bold">Being in the moment</div><div class="a" style="left:13px;top:30px;width:36px;height:36px;background:linear-gradient(160deg,#d3dde0,#c9d2cf)"></div><div class="a" style="left:8px;top:71px;width:38px;height:2px;background:#f0f3f6;opacity:.7"></div></div>
<div class="a" style="left:878px;top:891.5px;width:59px;height:82px;border-radius:10px;background:linear-gradient(180deg,#ecebe0,#e6dccd 40%,#d3d0cb 65%,#cacac8);border:1.5px solid #cbced3;overflow:hidden"></div>
<div class="a" style="left:956px;top:891.5px;width:64px;height:82px;border-radius:10px;background:linear-gradient(180deg,#e6e1e6,#dcd6dc);border:1.5px solid #cbced3;overflow:hidden"><div class="a" style="left:0;top:24px;width:64px;height:58px;background:linear-gradient(180deg,#dbd8df,#d8d3d6)"></div><div class="a" style="left:33px;top:24px;width:10px;height:48px;border-radius:5px;background:#bfb9bd"></div><div class="a" style="left:25px;top:34px;width:8px;height:16px;border-radius:4px;background:#e3e1e4;transform:rotate(20deg)"></div></div>
<div class="a" style="left:1039px;top:891.5px;width:85px;height:82px;border-radius:10px;background:#e0d6d0;border:1.5px solid #cbced3;overflow:hidden"><div class="a" style="left:0;top:0;width:85px;height:27px;background:#edc3c6"></div><div class="a" style="left:8px;top:9px;width:6px;height:6px;border-radius:50%;background:#fff"></div><div class="a" style="left:17px;top:11.5px;width:26px;height:1px;background:#f6e3e4"></div><div class="t" style="left:48px;top:4px;font-size:8.5px;line-height:6.5px;color:#fff;white-space:normal;width:40px;text-align:right;font-weight:bold">Moments that matter</div><div class="a" style="left:0;top:27px;width:49px;height:55px;background:linear-gradient(170deg,#d5dad6,#cfceb8 50%,#c9c4ad)"></div><div class="a" style="left:49px;top:27px;width:2px;height:55px;background:#e8bcc0"></div><div class="a" style="left:51px;top:27px;width:34px;height:55px;background:linear-gradient(180deg,#c8c8bc,#bfb9ad)"></div></div>
<div class="a" style="left:1143px;top:891.5px;width:111px;height:82px;border-radius:10px;background:linear-gradient(180deg,#dcdcd8,#d0cfca);border:1.5px solid #cbced3;overflow:hidden"><svg class="i" style="left:0;top:0" width="111" height="82"><path d="M0 30 C20 20,40 18,55 25 C70 30,90 45,111 50 V82 H0z" fill="#cac9c3"/></svg><div class="a" style="left:6px;top:8px;width:7px;height:7px;border-radius:50%;background:#f6f6f4"></div><div class="a" style="left:6px;top:66px;width:7px;height:7px;border-radius:50%;background:#f6f6f4"></div><div class="t" style="left:60px;top:6px;font-size:8px;font-weight:bold;color:#f6f6f4">CLIFFS</div><div class="t" style="left:61px;top:67px;font-size:8px;font-weight:bold;color:#f6f6f4">YEAR</div><div class="t" style="left:27px;top:23px;font-size:16px;letter-spacing:0.4px;color:#f6f6f4">GRATEFU</div><div class="t" style="left:18px;top:36.5px;font-size:15.5px;letter-spacing:0.3px;color:#f6f6f4">FOR THE RI</div><div class="t" style="left:5px;top:56px;font-size:8.5px;font-weight:bold;color:#f6f6f4;transform:rotate(-90deg);transform-origin:0 0">COAST</div></div>
<div class="a" style="left:246.0px;top:911.5px;width:27px;height:40.5px;border-radius:13.5px;background:#e8ebf2;box-shadow:0 1px 2px rgba(0,0,0,.18)"></div><svg class="i" style="left:249.5px;top:921px" width="20" height="22" viewBox="0 0 20 22"><circle cx="13" cy="8.2" r="6" fill="#3a3a3a"/><circle cx="7" cy="14.4" r="5.3" fill="#e8ebf2" stroke="#3a3a3a" stroke-width="1.7"/></svg>
<div class="a" style="left:356.5px;top:911.5px;width:27px;height:40.5px;border-radius:13.5px;background:#e8ebf2;box-shadow:0 1px 2px rgba(0,0,0,.18)"></div><svg class="i" style="left:360px;top:921px" width="20" height="22" viewBox="0 0 20 22"><circle cx="13" cy="8.2" r="6" fill="#3a3a3a"/><circle cx="7" cy="14.4" r="5.3" fill="#e8ebf2" stroke="#3a3a3a" stroke-width="1.7"/></svg>
<div class="a" style="left:1248.5px;top:911.5px;width:27px;height:40.5px;border-radius:13.5px;background:#e8ebf2;box-shadow:0 1px 2px rgba(0,0,0,.18)"></div><svg class="i" style="left:1252px;top:921px" width="20" height="22" viewBox="0 0 20 22"><circle cx="13" cy="8.2" r="6" fill="#3a3a3a"/><circle cx="7" cy="14.4" r="5.3" fill="#e8ebf2" stroke="#3a3a3a" stroke-width="1.7"/></svg>
<div class="a" style="left:1276px;top:892px;width:86px;height:79px;border-radius:11px;border:2px solid #c3c6ca;background:#f0f3f8"></div>
<div class="a" style="left:1278.5px;top:894.5px;width:81px;height:74px;border-radius:9px;background:#3c6489"></div>
<div class="t" style="left:1291px;top:913px;font-size:13px;letter-spacing:0.3px;color:#fff;-webkit-text-stroke:0.3px #fff">A PopSci</div><div class="t" style="left:1291px;top:929px;font-size:13px;letter-spacing:0.3px;color:#fff;-webkit-text-stroke:0.3px #fff">presenta</div>
<div class="a" style="left:459px;top:911.5px;width:26px;height:40.5px;border-radius:13px;background:#0a5fa0"></div><svg class="i" style="left:464px;top:923.5px" width="16" height="16" viewBox="0 0 16 16"><rect x="1" y="1" width="14" height="14" rx="2" fill="#fff"/><rect x="8.5" y="3" width="4.5" height="10" fill="#0a5fa0"/><rect x="4.2" y="3" width="1.3" height="1.3" fill="#0a5fa0"/><rect x="6.7" y="3" width="1.3" height="1.3" fill="#0a5fa0"/><rect x="3.0" y="5" width="1.3" height="1.3" fill="#0a5fa0"/><rect x="5.5" y="5" width="1.3" height="1.3" fill="#0a5fa0"/><rect x="4.2" y="7" width="1.3" height="1.3" fill="#0a5fa0"/><rect x="6.7" y="7" width="1.3" height="1.3" fill="#0a5fa0"/><rect x="3.0" y="9" width="1.3" height="1.3" fill="#0a5fa0"/><rect x="5.5" y="9" width="1.3" height="1.3" fill="#0a5fa0"/><rect x="4.2" y="11" width="1.3" height="1.3" fill="#0a5fa0"/><rect x="6.7" y="11" width="1.3" height="1.3" fill="#0a5fa0"/></svg>
<div class="a" style="left:530px;top:911.5px;width:26px;height:40.5px;border-radius:13px;background:#0a5fa0"></div><svg class="i" style="left:535px;top:923.5px" width="16" height="16" viewBox="0 0 16 16"><rect x="1" y="1" width="14" height="14" rx="2" fill="#fff"/><rect x="8.5" y="3" width="4.5" height="10" fill="#0a5fa0"/><rect x="4.2" y="3" width="1.3" height="1.3" fill="#0a5fa0"/><rect x="6.7" y="3" width="1.3" height="1.3" fill="#0a5fa0"/><rect x="3.0" y="5" width="1.3" height="1.3" fill="#0a5fa0"/><rect x="5.5" y="5" width="1.3" height="1.3" fill="#0a5fa0"/><rect x="4.2" y="7" width="1.3" height="1.3" fill="#0a5fa0"/><rect x="6.7" y="7" width="1.3" height="1.3" fill="#0a5fa0"/><rect x="3.0" y="9" width="1.3" height="1.3" fill="#0a5fa0"/><rect x="5.5" y="9" width="1.3" height="1.3" fill="#0a5fa0"/><rect x="4.2" y="11" width="1.3" height="1.3" fill="#0a5fa0"/><rect x="6.7" y="11" width="1.3" height="1.3" fill="#0a5fa0"/></svg>
<div class="a" style="left:605px;top:911.5px;width:26px;height:40.5px;border-radius:13px;background:#0a5fa0"></div><svg class="i" style="left:610px;top:923.5px" width="16" height="16" viewBox="0 0 16 16"><rect x="1" y="1" width="14" height="14" rx="2" fill="#fff"/><rect x="8.5" y="3" width="4.5" height="10" fill="#0a5fa0"/><rect x="4.2" y="3" width="1.3" height="1.3" fill="#0a5fa0"/><rect x="6.7" y="3" width="1.3" height="1.3" fill="#0a5fa0"/><rect x="3.0" y="5" width="1.3" height="1.3" fill="#0a5fa0"/><rect x="5.5" y="5" width="1.3" height="1.3" fill="#0a5fa0"/><rect x="4.2" y="7" width="1.3" height="1.3" fill="#0a5fa0"/><rect x="6.7" y="7" width="1.3" height="1.3" fill="#0a5fa0"/><rect x="3.0" y="9" width="1.3" height="1.3" fill="#0a5fa0"/><rect x="5.5" y="9" width="1.3" height="1.3" fill="#0a5fa0"/><rect x="4.2" y="11" width="1.3" height="1.3" fill="#0a5fa0"/><rect x="6.7" y="11" width="1.3" height="1.3" fill="#0a5fa0"/></svg>
<div class="a" style="left:695px;top:911.5px;width:26px;height:40.5px;border-radius:13px;background:#0a5fa0"></div><svg class="i" style="left:700px;top:923.5px" width="16" height="16" viewBox="0 0 16 16"><rect x="1" y="1" width="14" height="14" rx="2" fill="#fff"/><rect x="8.5" y="3" width="4.5" height="10" fill="#0a5fa0"/><rect x="4.2" y="3" width="1.3" height="1.3" fill="#0a5fa0"/><rect x="6.7" y="3" width="1.3" height="1.3" fill="#0a5fa0"/><rect x="3.0" y="5" width="1.3" height="1.3" fill="#0a5fa0"/><rect x="5.5" y="5" width="1.3" height="1.3" fill="#0a5fa0"/><rect x="4.2" y="7" width="1.3" height="1.3" fill="#0a5fa0"/><rect x="6.7" y="7" width="1.3" height="1.3" fill="#0a5fa0"/><rect x="3.0" y="9" width="1.3" height="1.3" fill="#0a5fa0"/><rect x="5.5" y="9" width="1.3" height="1.3" fill="#0a5fa0"/><rect x="4.2" y="11" width="1.3" height="1.3" fill="#0a5fa0"/><rect x="6.7" y="11" width="1.3" height="1.3" fill="#0a5fa0"/></svg>
<div class="a" style="left:777px;top:911.5px;width:26px;height:40.5px;border-radius:13px;background:#0a5fa0"></div><svg class="i" style="left:782px;top:923.5px" width="16" height="16" viewBox="0 0 16 16"><rect x="1" y="1" width="14" height="14" rx="2" fill="#fff"/><rect x="8.5" y="3" width="4.5" height="10" fill="#0a5fa0"/><rect x="4.2" y="3" width="1.3" height="1.3" fill="#0a5fa0"/><rect x="6.7" y="3" width="1.3" height="1.3" fill="#0a5fa0"/><rect x="3.0" y="5" width="1.3" height="1.3" fill="#0a5fa0"/><rect x="5.5" y="5" width="1.3" height="1.3" fill="#0a5fa0"/><rect x="4.2" y="7" width="1.3" height="1.3" fill="#0a5fa0"/><rect x="6.7" y="7" width="1.3" height="1.3" fill="#0a5fa0"/><rect x="3.0" y="9" width="1.3" height="1.3" fill="#0a5fa0"/><rect x="5.5" y="9" width="1.3" height="1.3" fill="#0a5fa0"/><rect x="4.2" y="11" width="1.3" height="1.3" fill="#0a5fa0"/><rect x="6.7" y="11" width="1.3" height="1.3" fill="#0a5fa0"/></svg>
<div class="a" style="left:855px;top:911.5px;width:26px;height:40.5px;border-radius:13px;background:#0a5fa0"></div><svg class="i" style="left:860px;top:923.5px" width="16" height="16" viewBox="0 0 16 16"><rect x="1" y="1" width="14" height="14" rx="2" fill="#fff"/><rect x="8.5" y="3" width="4.5" height="10" fill="#0a5fa0"/><rect x="4.2" y="3" width="1.3" height="1.3" fill="#0a5fa0"/><rect x="6.7" y="3" width="1.3" height="1.3" fill="#0a5fa0"/><rect x="3.0" y="5" width="1.3" height="1.3" fill="#0a5fa0"/><rect x="5.5" y="5" width="1.3" height="1.3" fill="#0a5fa0"/><rect x="4.2" y="7" width="1.3" height="1.3" fill="#0a5fa0"/><rect x="6.7" y="7" width="1.3" height="1.3" fill="#0a5fa0"/><rect x="3.0" y="9" width="1.3" height="1.3" fill="#0a5fa0"/><rect x="5.5" y="9" width="1.3" height="1.3" fill="#0a5fa0"/><rect x="4.2" y="11" width="1.3" height="1.3" fill="#0a5fa0"/><rect x="6.7" y="11" width="1.3" height="1.3" fill="#0a5fa0"/></svg>
<div class="a" style="left:934px;top:911.5px;width:26px;height:40.5px;border-radius:13px;background:#0a5fa0"></div><svg class="i" style="left:939px;top:923.5px" width="16" height="16" viewBox="0 0 16 16"><rect x="1" y="1" width="14" height="14" rx="2" fill="#fff"/><rect x="8.5" y="3" width="4.5" height="10" fill="#0a5fa0"/><rect x="4.2" y="3" width="1.3" height="1.3" fill="#0a5fa0"/><rect x="6.7" y="3" width="1.3" height="1.3" fill="#0a5fa0"/><rect x="3.0" y="5" width="1.3" height="1.3" fill="#0a5fa0"/><rect x="5.5" y="5" width="1.3" height="1.3" fill="#0a5fa0"/><rect x="4.2" y="7" width="1.3" height="1.3" fill="#0a5fa0"/><rect x="6.7" y="7" width="1.3" height="1.3" fill="#0a5fa0"/><rect x="3.0" y="9" width="1.3" height="1.3" fill="#0a5fa0"/><rect x="5.5" y="9" width="1.3" height="1.3" fill="#0a5fa0"/><rect x="4.2" y="11" width="1.3" height="1.3" fill="#0a5fa0"/><rect x="6.7" y="11" width="1.3" height="1.3" fill="#0a5fa0"/></svg>
<div class="a" style="left:1017px;top:911.5px;width:26px;height:40.5px;border-radius:13px;background:#0a5fa0"></div><svg class="i" style="left:1022px;top:923.5px" width="16" height="16" viewBox="0 0 16 16"><rect x="1" y="1" width="14" height="14" rx="2" fill="#fff"/><rect x="8.5" y="3" width="4.5" height="10" fill="#0a5fa0"/><rect x="4.2" y="3" width="1.3" height="1.3" fill="#0a5fa0"/><rect x="6.7" y="3" width="1.3" height="1.3" fill="#0a5fa0"/><rect x="3.0" y="5" width="1.3" height="1.3" fill="#0a5fa0"/><rect x="5.5" y="5" width="1.3" height="1.3" fill="#0a5fa0"/><rect x="4.2" y="7" width="1.3" height="1.3" fill="#0a5fa0"/><rect x="6.7" y="7" width="1.3" height="1.3" fill="#0a5fa0"/><rect x="3.0" y="9" width="1.3" height="1.3" fill="#0a5fa0"/><rect x="5.5" y="9" width="1.3" height="1.3" fill="#0a5fa0"/><rect x="4.2" y="11" width="1.3" height="1.3" fill="#0a5fa0"/><rect x="6.7" y="11" width="1.3" height="1.3" fill="#0a5fa0"/></svg>
<div class="a" style="left:1120px;top:911.5px;width:26px;height:40.5px;border-radius:13px;background:#0a5fa0"></div><svg class="i" style="left:1125px;top:923.5px" width="16" height="16" viewBox="0 0 16 16"><rect x="1" y="1" width="14" height="14" rx="2" fill="#fff"/><rect x="8.5" y="3" width="4.5" height="10" fill="#0a5fa0"/><rect x="4.2" y="3" width="1.3" height="1.3" fill="#0a5fa0"/><rect x="6.7" y="3" width="1.3" height="1.3" fill="#0a5fa0"/><rect x="3.0" y="5" width="1.3" height="1.3" fill="#0a5fa0"/><rect x="5.5" y="5" width="1.3" height="1.3" fill="#0a5fa0"/><rect x="4.2" y="7" width="1.3" height="1.3" fill="#0a5fa0"/><rect x="6.7" y="7" width="1.3" height="1.3" fill="#0a5fa0"/><rect x="3.0" y="9" width="1.3" height="1.3" fill="#0a5fa0"/><rect x="5.5" y="9" width="1.3" height="1.3" fill="#0a5fa0"/><rect x="4.2" y="11" width="1.3" height="1.3" fill="#0a5fa0"/><rect x="6.7" y="11" width="1.3" height="1.3" fill="#0a5fa0"/></svg>
<div class="a" style="left:1275.5px;top:979.5px;width:88px;height:29px;border-radius:3px;border:2.5px solid #0b57d0;background:#6cd68a"></div>
<div class="t" style="left:1293px;top:989px;font-size:14px;color:#1d4a2a">Aa</div><div class="t" style="left:1324px;top:989px;font-size:13.5px;color:#1d4a2a;width:37px;overflow:hidden">A Pop</div>
<div class="a" style="left:1368.5px;top:984px;width:8px;height:20px;border-radius:4px;background:#c7c9cc"></div>
<div class="a" style="left:1348.5px;top:920.5px;width:44px;height:44px;border-radius:12px;background:#a8c7fa;box-shadow:0 1px 3px rgba(0,0,0,.25),0 2px 6px rgba(0,0,0,.1)"></div>
<svg class="i" style="left:1359.5px;top:931.5px" width="22" height="22" viewBox="0 0 24 24"><path d="M19 13h-6v6h-2v-6H5v-2h6V5h2v6h6v2z" fill="#0b1e4a"/></svg>
<div class="a" style="left:1225px;top:1014px;width:138px;height:30.5px;border-radius:0 5px 5px 0;background:#dce4f3"></div>
<div class="a" style="left:163px;top:1013.5px;width:1068px;height:31.5px;border-radius:4px;background:#5eb3ee"></div>
<svg class="i" style="left:179px;top:1018px" width="22" height="22" viewBox="0 0 24 24"><path d="M12 3v10.55c-.59-.34-1.27-.55-2-.55-2.21 0-4 1.79-4 4s1.79 4 4 4 4-1.790 4-4V7h4V3h-6z" fill="#0b1e4a"/></svg>
<div class="t" style="left:210px;top:1022px;font-size:14px;color:#0b2a4a">Hip Hop Feel Good Upbeat Lofi (Provided by Shutterstock)</div>
<svg class="i" style="left:0;top:0" width="2000" height="1125"><rect x="582.0" y="1020.0" width="2.2" height="19" rx="1" fill="#133f6a" opacity="0.10"/><rect x="586.5" y="1020.5" width="2.2" height="18" rx="1" fill="#133f6a" opacity="0.10"/><rect x="590.9" y="1020.0" width="2.2" height="19" rx="1" fill="#133f6a" opacity="0.10"/><rect x="595.4" y="1023.0" width="2.2" height="13" rx="1" fill="#133f6a" opacity="0.10"/><rect x="599.8" y="1020.0" width="2.2" height="19" rx="1" fill="#133f6a" opacity="0.10"/><rect x="604.3" y="1022.5" width="2.2" height="14" rx="1" fill="#133f6a" opacity="0.10"/><rect x="608.7" y="1021.5" width="2.2" height="16" rx="1" fill="#133f6a" opacity="0.10"/><rect x="613.2" y="1023.0" width="2.2" height="13" rx="1" fill="#133f6a" opacity="0.10"/><rect x="617.6" y="1020.0" width="2.2" height="19" rx="1" fill="#133f6a" opacity="0.10"/><rect x="622.1" y="1020.5" width="2.2" height="18" rx="1" fill="#133f6a" opacity="0.10"/><rect x="626.5" y="1020.0" width="2.2" height="19" rx="1" fill="#133f6a" opacity="0.10"/><rect x="631.0" y="1020.0" width="2.2" height="19" rx="1" fill="#133f6a" opacity="0.10"/><rect x="635.4" y="1028.8" width="2.2" height="1.5" rx="1" fill="#133f6a" opacity="0.10"/><rect x="639.9" y="1022.5" width="2.2" height="14" rx="1" fill="#133f6a" opacity="0.10"/><rect x="644.3" y="1028.8" width="2.2" height="1.5" rx="1" fill="#133f6a" opacity="0.16"/><rect x="648.8" y="1020.0" width="2.2" height="19" rx="1" fill="#133f6a" opacity="0.17"/><rect x="653.2" y="1028.8" width="2.2" height="1.5" rx="1" fill="#133f6a" opacity="0.19"/><rect x="657.7" y="1020.5" width="2.2" height="18" rx="1" fill="#133f6a" opacity="0.20"/><rect x="662.1" y="1021.5" width="2.2" height="16" rx="1" fill="#133f6a" opacity="0.21"/><rect x="666.6" y="1021.0" width="2.2" height="17" rx="1" fill="#133f6a" opacity="0.23"/><rect x="671.0" y="1022.5" width="2.2" height="14" rx="1" fill="#133f6a" opacity="0.24"/><rect x="675.5" y="1021.0" width="2.2" height="17" rx="1" fill="#133f6a" opacity="0.25"/><rect x="679.9" y="1020.0" width="2.2" height="19" rx="1" fill="#133f6a" opacity="0.26"/><rect x="684.4" y="1022.5" width="2.2" height="14" rx="1" fill="#133f6a" opacity="0.28"/><rect x="688.8" y="1021.0" width="2.2" height="17" rx="1" fill="#133f6a" opacity="0.29"/><rect x="693.3" y="1020.0" width="2.2" height="19" rx="1" fill="#133f6a" opacity="0.30"/><rect x="697.7" y="1022.5" width="2.2" height="14" rx="1" fill="#133f6a" opacity="0.31"/><rect x="702.2" y="1022.5" width="2.2" height="14" rx="1" fill="#133f6a" opacity="0.33"/><rect x="706.6" y="1021.0" width="2.2" height="17" rx="1" fill="#133f6a" opacity="0.34"/><rect x="711.1" y="1022.5" width="2.2" height="14" rx="1" fill="#133f6a" opacity="0.35"/><rect x="715.5" y="1022.5" width="2.2" height="14" rx="1" fill="#133f6a" opacity="0.36"/><rect x="720.0" y="1022.5" width="2.2" height="14" rx="1" fill="#133f6a" opacity="0.38"/><rect x="724.4" y="1020.5" width="2.2" height="18" rx="1" fill="#133f6a" opacity="0.39"/><rect x="728.9" y="1020.0" width="2.2" height="19" rx="1" fill="#133f6a" opacity="0.40"/><rect x="733.3" y="1021.0" width="2.2" height="17" rx="1" fill="#133f6a" opacity="0.41"/><rect x="737.8" y="1021.0" width="2.2" height="17" rx="1" fill="#133f6a" opacity="0.43"/><rect x="742.2" y="1020.5" width="2.2" height="18" rx="1" fill="#133f6a" opacity="0.44"/><rect x="746.7" y="1022.5" width="2.2" height="14" rx="1" fill="#133f6a" opacity="0.45"/><rect x="751.1" y="1023.0" width="2.2" height="13" rx="1" fill="#133f6a" opacity="0.46"/><rect x="755.6" y="1025.0" width="2.2" height="9" rx="1" fill="#133f6a" opacity="0.48"/><rect x="760.0" y="1020.5" width="2.2" height="18" rx="1" fill="#133f6a" opacity="0.49"/><rect x="764.5" y="1023.0" width="2.2" height="13" rx="1" fill="#133f6a" opacity="0.50"/><rect x="768.9" y="1023.0" width="2.2" height="13" rx="1" fill="#133f6a" opacity="0.51"/><rect x="773.4" y="1023.0" width="2.2" height="13" rx="1" fill="#133f6a" opacity="0.53"/><rect x="777.8" y="1020.5" width="2.2" height="18" rx="1" fill="#133f6a" opacity="0.54"/><rect x="782.3" y="1022.5" width="2.2" height="14" rx="1" fill="#133f6a" opacity="0.55"/><rect x="786.7" y="1021.5" width="2.2" height="16" rx="1" fill="#133f6a" opacity="0.56"/><rect x="791.2" y="1028.8" width="2.2" height="1.5" rx="1" fill="#133f6a" opacity="0.58"/><rect x="795.6" y="1020.0" width="2.2" height="19" rx="1" fill="#133f6a" opacity="0.59"/><rect x="800.1" y="1022.5" width="2.2" height="14" rx="1" fill="#133f6a" opacity="0.60"/><rect x="804.5" y="1020.5" width="2.2" height="18" rx="1" fill="#133f6a" opacity="0.61"/><rect x="809.0" y="1020.0" width="2.2" height="19" rx="1" fill="#133f6a" opacity="0.63"/><rect x="813.4" y="1022.5" width="2.2" height="14" rx="1" fill="#133f6a" opacity="0.64"/><rect x="817.9" y="1028.8" width="2.2" height="1.5" rx="1" fill="#133f6a" opacity="0.65"/><rect x="822.3" y="1024.0" width="2.2" height="11" rx="1" fill="#133f6a" opacity="0.67"/><rect x="826.8" y="1020.0" width="2.2" height="19" rx="1" fill="#133f6a" opacity="0.68"/><rect x="831.2" y="1021.0" width="2.2" height="17" rx="1" fill="#133f6a" opacity="0.69"/><rect x="835.7" y="1022.5" width="2.2" height="14" rx="1" fill="#133f6a" opacity="0.70"/><rect x="840.1" y="1023.0" width="2.2" height="13" rx="1" fill="#133f6a" opacity="0.72"/><rect x="844.6" y="1022.5" width="2.2" height="14" rx="1" fill="#133f6a" opacity="0.73"/><rect x="849.0" y="1021.0" width="2.2" height="17" rx="1" fill="#133f6a" opacity="0.74"/><rect x="853.5" y="1021.5" width="2.2" height="16" rx="1" fill="#133f6a" opacity="0.75"/><rect x="857.9" y="1020.5" width="2.2" height="18" rx="1" fill="#133f6a" opacity="0.77"/><rect x="862.4" y="1021.5" width="2.2" height="16" rx="1" fill="#133f6a" opacity="0.78"/><rect x="866.8" y="1021.5" width="2.2" height="16" rx="1" fill="#133f6a" opacity="0.79"/><rect x="871.3" y="1021.0" width="2.2" height="17" rx="1" fill="#133f6a" opacity="1.00"/><rect x="875.7" y="1020.0" width="2.2" height="19" rx="1" fill="#133f6a" opacity="1.00"/><rect x="880.2" y="1021.5" width="2.2" height="16" rx="1" fill="#133f6a" opacity="1.00"/><rect x="884.6" y="1023.0" width="2.2" height="13" rx="1" fill="#133f6a" opacity="1.00"/><rect x="889.1" y="1021.5" width="2.2" height="16" rx="1" fill="#133f6a" opacity="1.00"/><rect x="893.5" y="1020.5" width="2.2" height="18" rx="1" fill="#133f6a" opacity="1.00"/><rect x="898.0" y="1020.0" width="2.2" height="19" rx="1" fill="#133f6a" opacity="1.00"/><rect x="902.4" y="1025.0" width="2.2" height="9" rx="1" fill="#133f6a" opacity="1.00"/><rect x="906.9" y="1025.0" width="2.2" height="9" rx="1" fill="#133f6a" opacity="1.00"/><rect x="911.3" y="1021.0" width="2.2" height="17" rx="1" fill="#133f6a" opacity="1.00"/><rect x="915.8" y="1020.5" width="2.2" height="18" rx="1" fill="#133f6a" opacity="1.00"/><rect x="920.2" y="1020.0" width="2.2" height="19" rx="1" fill="#133f6a" opacity="1.00"/><rect x="924.7" y="1020.0" width="2.2" height="19" rx="1" fill="#133f6a" opacity="1.00"/><rect x="929.1" y="1023.0" width="2.2" height="13" rx="1" fill="#133f6a" opacity="1.00"/><rect x="933.6" y="1021.5" width="2.2" height="16" rx="1" fill="#133f6a" opacity="1.00"/><rect x="938.0" y="1020.0" width="2.2" height="19" rx="1" fill="#133f6a" opacity="1.00"/><rect x="942.5" y="1020.0" width="2.2" height="19" rx="1" fill="#133f6a" opacity="1.00"/><rect x="946.9" y="1021.0" width="2.2" height="17" rx="1" fill="#133f6a" opacity="1.00"/><rect x="951.4" y="1021.5" width="2.2" height="16" rx="1" fill="#133f6a" opacity="1.00"/><rect x="955.8" y="1022.5" width="2.2" height="14" rx="1" fill="#133f6a" opacity="1.00"/><rect x="960.3" y="1020.5" width="2.2" height="18" rx="1" fill="#133f6a" opacity="1.00"/><rect x="964.7" y="1022.5" width="2.2" height="14" rx="1" fill="#133f6a" opacity="1.00"/><rect x="969.2" y="1024.0" width="2.2" height="11" rx="1" fill="#133f6a" opacity="1.00"/><rect x="973.6" y="1021.5" width="2.2" height="16" rx="1" fill="#133f6a" opacity="1.00"/><rect x="978.1" y="1025.0" width="2.2" height="9" rx="1" fill="#133f6a" opacity="1.00"/><rect x="982.5" y="1021.0" width="2.2" height="17" rx="1" fill="#133f6a" opacity="1.00"/><rect x="987.0" y="1020.0" width="2.2" height="19" rx="1" fill="#133f6a" opacity="1.00"/><rect x="991.4" y="1021.5" width="2.2" height="16" rx="1" fill="#133f6a" opacity="1.00"/><rect x="995.9" y="1022.5" width="2.2" height="14" rx="1" fill="#133f6a" opacity="1.00"/><rect x="1000.3" y="1021.0" width="2.2" height="17" rx="1" fill="#133f6a" opacity="1.00"/><rect x="1004.8" y="1022.5" width="2.2" height="14" rx="1" fill="#133f6a" opacity="1.00"/><rect x="1009.2" y="1028.8" width="2.2" height="1.5" rx="1" fill="#133f6a" opacity="1.00"/><rect x="1013.7" y="1020.5" width="2.2" height="18" rx="1" fill="#133f6a" opacity="1.00"/><rect x="1018.1" y="1028.8" width="2.2" height="1.5" rx="1" fill="#133f6a" opacity="1.00"/><rect x="1022.6" y="1021.5" width="2.2" height="16" rx="1" fill="#133f6a" opacity="1.00"/><rect x="1027.0" y="1022.5" width="2.2" height="14" rx="1" fill="#133f6a" opacity="1.00"/><rect x="1031.5" y="1021.0" width="2.2" height="17" rx="1" fill="#133f6a" opacity="1.00"/><rect x="1035.9" y="1021.5" width="2.2" height="16" rx="1" fill="#133f6a" opacity="1.00"/><rect x="1040.4" y="1021.0" width="2.2" height="17" rx="1" fill="#133f6a" opacity="1.00"/><rect x="1044.8" y="1020.5" width="2.2" height="18" rx="1" fill="#133f6a" opacity="0.98"/><rect x="1049.3" y="1020.5" width="2.2" height="18" rx="1" fill="#133f6a" opacity="0.97"/><rect x="1053.7" y="1022.5" width="2.2" height="14" rx="1" fill="#133f6a" opacity="0.95"/><rect x="1058.2" y="1020.0" width="2.2" height="19" rx="1" fill="#133f6a" opacity="0.94"/><rect x="1062.6" y="1028.8" width="2.2" height="1.5" rx="1" fill="#133f6a" opacity="0.92"/><rect x="1067.1" y="1020.5" width="2.2" height="18" rx="1" fill="#133f6a" opacity="0.91"/><rect x="1071.5" y="1020.0" width="2.2" height="19" rx="1" fill="#133f6a" opacity="0.89"/><rect x="1076.0" y="1025.0" width="2.2" height="9" rx="1" fill="#133f6a" opacity="0.88"/><rect x="1080.4" y="1021.0" width="2.2" height="17" rx="1" fill="#133f6a" opacity="0.86"/><rect x="1084.9" y="1021.0" width="2.2" height="17" rx="1" fill="#133f6a" opacity="0.85"/><rect x="1089.3" y="1020.0" width="2.2" height="19" rx="1" fill="#133f6a" opacity="0.83"/><rect x="1093.8" y="1020.5" width="2.2" height="18" rx="1" fill="#133f6a" opacity="0.82"/><rect x="1098.2" y="1022.5" width="2.2" height="14" rx="1" fill="#133f6a" opacity="0.80"/><rect x="1102.7" y="1020.0" width="2.2" height="19" rx="1" fill="#133f6a" opacity="0.79"/><rect x="1107.1" y="1028.8" width="2.2" height="1.5" rx="1" fill="#133f6a" opacity="0.77"/><rect x="1111.6" y="1020.5" width="2.2" height="18" rx="1" fill="#133f6a" opacity="0.76"/><rect x="1116.0" y="1028.8" width="2.2" height="1.5" rx="1" fill="#133f6a" opacity="0.74"/><rect x="1120.5" y="1022.5" width="2.2" height="14" rx="1" fill="#133f6a" opacity="0.72"/><rect x="1124.9" y="1020.0" width="2.2" height="19" rx="1" fill="#133f6a" opacity="0.71"/><rect x="1129.4" y="1020.5" width="2.2" height="18" rx="1" fill="#133f6a" opacity="0.69"/><rect x="1133.8" y="1022.5" width="2.2" height="14" rx="1" fill="#133f6a" opacity="0.68"/><rect x="1138.3" y="1021.5" width="2.2" height="16" rx="1" fill="#133f6a" opacity="0.66"/><rect x="1142.7" y="1021.5" width="2.2" height="16" rx="1" fill="#133f6a" opacity="0.65"/><rect x="1147.2" y="1021.0" width="2.2" height="17" rx="1" fill="#133f6a" opacity="0.63"/><rect x="1151.6" y="1020.5" width="2.2" height="18" rx="1" fill="#133f6a" opacity="0.62"/><rect x="1156.1" y="1021.5" width="2.2" height="16" rx="1" fill="#133f6a" opacity="0.60"/><rect x="1160.5" y="1021.0" width="2.2" height="17" rx="1" fill="#133f6a" opacity="0.59"/><rect x="1165.0" y="1024.0" width="2.2" height="11" rx="1" fill="#133f6a" opacity="0.57"/><rect x="1169.4" y="1021.5" width="2.2" height="16" rx="1" fill="#133f6a" opacity="0.56"/><rect x="1173.9" y="1020.5" width="2.2" height="18" rx="1" fill="#133f6a" opacity="0.54"/><rect x="1178.3" y="1021.0" width="2.2" height="17" rx="1" fill="#133f6a" opacity="0.53"/><rect x="1182.8" y="1021.5" width="2.2" height="16" rx="1" fill="#133f6a" opacity="0.51"/><rect x="1187.2" y="1022.5" width="2.2" height="14" rx="1" fill="#133f6a" opacity="0.50"/><rect x="1191.7" y="1021.0" width="2.2" height="17" rx="1" fill="#133f6a" opacity="0.48"/><rect x="1196.1" y="1022.5" width="2.2" height="14" rx="1" fill="#133f6a" opacity="0.47"/><rect x="1200.6" y="1021.0" width="2.2" height="17" rx="1" fill="#133f6a" opacity="0.45"/><rect x="1205.0" y="1020.5" width="2.2" height="18" rx="1" fill="#133f6a" opacity="0.44"/><rect x="1209.5" y="1020.0" width="2.2" height="19" rx="1" fill="#133f6a" opacity="0.42"/><rect x="1213.9" y="1021.0" width="2.2" height="17" rx="1" fill="#133f6a" opacity="0.41"/><rect x="1218.4" y="1020.0" width="2.2" height="19" rx="1" fill="#133f6a" opacity="0.39"/><rect x="1222.8" y="1022.5" width="2.2" height="14" rx="1" fill="#133f6a" opacity="0.37"/></svg>
<!-- PLAYHEAD -->
<div class="a" style="left:1272px;top:892px;width:3px;height:152px;background:#0b57d0"></div>
<svg class="i" style="left:1265px;top:875px" width="17" height="11" viewBox="0 0 17 11"><path d="M1.5 1.2h14L8.5 10z" fill="#0b57d0" stroke="#0b57d0" stroke-linejoin="round" stroke-width="2"/></svg>

<!-- SIDE PANEL -->
<div class="a" style="left:1442px;top:204px;width:360px;height:870px;border-radius:20px;background:#f0f3f8"></div>
<svg class="i" style="left:1463px;top:228px" width="26" height="22" viewBox="0 0 26 22"><path d="M1 1h14v4H10.2v16H5.8V5H1z" fill="#1f1f1f"/><path d="M13 8h12v3.5h-4v9.5h-4v-9.5h-4z" fill="#1f1f1f"/></svg>
<div class="t" style="left:1498px;top:229px;font-size:18.5px;letter-spacing:0.3px;color:#1f1f1f">Text</div>
<svg class="i" style="left:1755px;top:226px" width="25" height="25" viewBox="0 0 24 24"><path d="M19 6.41L17.59 5 12 10.59 6.41 5 5 6.41 10.59 12 5 17.59 6.41 19 12 13.41 17.59 19 19 17.59 13.41 12z" fill="#1f1f1f"/></svg>
<div class="a" style="left:1789px;top:274px;width:8px;height:500px;border-radius:4px;background:#dadce0"></div>
<div class="a" style="left:1462px;top:273px;width:302px;height:53px;border-radius:14px;background:#e7ebf4"></div>
<div class="a" style="left:1462px;top:336px;width:302px;height:53px;border-radius:14px;background:#e7ebf4"></div>
<div class="a" style="left:1462px;top:398px;width:302px;height:54px;border-radius:14px;background:#e7ebf4"></div>
<div class="t" style="left:1480px;top:288px;font-size:27px;color:#fbfcfe;letter-spacing:1px;transform:scaleX(1.078);transform-origin:0 0">Add a title</div>
<div class="t" style="left:1480px;top:351px;font-size:21px;color:#fbfcfe;letter-spacing:0.6px;transform:scaleX(1.059);transform-origin:0 0">Add a subtitle</div>
<div class="t" style="left:1480px;top:417px;font-size:15px;color:#fbfcfe;letter-spacing:0.4px;transform:scaleX(1.063);transform-origin:0 0">Add body text</div>
<div class="t" style="left:1461px;top:487.5px;font-size:17px;letter-spacing:0.25px;color:#0b57d0;-webkit-text-stroke:0.3px #0b57d0">Headlines</div>
<svg class="i" style="left:1543px;top:485px" width="20" height="20" viewBox="0 0 24 24"><path d="M12 4l-1.41 1.41L16.17 11H4v2h12.17l-5.58 5.59L12 20l8-8z" fill="#0b57d0"/></svg>
<div class="a" style="left:1462px;top:524px;width:182px;height:142px;border-radius:14px;background:#e7ebf4"></div>
<div class="a" style="left:1651px;top:524px;width:112px;height:67px;border-radius:14px;background:#e7ebf4"></div>
<div class="a" style="left:1651px;top:599px;width:112px;height:67px;border-radius:14px;background:#e7ebf4"></div>
<!-- This week's recap -->
<div class="a" style="left:1512px;top:556px;width:103px;height:27px;background:#fbc6e2;transform:rotate(-0.5deg)"></div>
<div class="a" style="left:1471px;top:581px;width:124px;height:30px;background:#0b7be8;transform:rotate(-1.5deg)"></div>
<div class="a" style="left:1516px;top:606px;width:119px;height:28px;background:#0b5e2c;transform:rotate(1deg)"></div>
<div class="t" style="left:1542px;top:557px;font-size:22px;letter-spacing:0.6px;color:#111">This</div>
<div class="t" style="left:1496px;top:583px;font-size:22px;letter-spacing:0.5px;color:#111">Week’s</div>
<div class="t" style="left:1542px;top:607px;font-size:22px;letter-spacing:0.4px;color:#f8c8e0">Recap</div>
<!-- Episode one -->
<svg class="i" style="left:1651px;top:524px" width="112" height="67" viewBox="0 0 112 67"><circle cx="54.4" cy="32" r="16" fill="#9cc43b"/><path d="M17 56 C25 40,32 24,41 24 C55 24,70 50,86 48 C93 47,97 30,101.6 13" fill="none" stroke="#1b3b2c" stroke-width="3.2" stroke-linecap="round"/><g transform="rotate(-10.5 53 34)"><rect x="10" y="25.3" width="86" height="17.5" fill="#e8532a"/><text x="53" y="38.6" text-anchor="middle" font-family="Liberation Sans" font-weight="bold" font-size="12" fill="#fbe7cf" textLength="76" lengthAdjust="spacingAndGlyphs">Episode One</text></g></svg>
<!-- Q&A -->
<div class="a" style="left:1689.5px;top:636px;width:40px;height:9.5px;background:#f7e27a;border:1px solid #666"></div>
<div class="a" style="left:1726px;top:627px;width:9.5px;height:10px;background:#e27a62;border:1px solid #666"></div>
<div class="a" style="left:1672px;top:607.5px;width:54.5px;height:29px;background:#ecc5de;border:1px solid #555"></div>
<div class="t" style="left:1681px;top:613.5px;font-size:16px;color:#111;letter-spacing:0.3px">Q&amp;A</div>
<div class="a" style="left:1726px;top:636px;width:18.5px;height:20.5px;background:#9fd3e6;border:1px solid #555"></div>
<div class="t" style="left:1731px;top:640px;font-size:13px;color:#111;font-weight:bold">?</div>

<div class="t" style="left:1461px;top:700.5px;font-size:17px;letter-spacing:0.15px;color:#0b57d0;-webkit-text-stroke:0.3px #0b57d0">Speakers</div>
<svg class="i" style="left:1538px;top:699px" width="20" height="20" viewBox="0 0 24 24"><path d="M12 4l-1.41 1.41L16.17 11H4v2h12.17l-5.58 5.59L12 20l8-8z" fill="#0b57d0"/></svg>
<div class="a" style="left:1462px;top:738px;width:182px;height:142px;border-radius:14px;background:#e7ebf4"></div>
<div class="a" style="left:1651px;top:738px;width:112px;height:67px;border-radius:14px;background:#e7ebf4"></div>
<div class="a" style="left:1651px;top:812px;width:112px;height:68px;border-radius:14px;background:#e7ebf4"></div>
<div class="a" style="left:1477px;top:775px;width:93px;height:32px;border-radius:4px;background:#90ee0a;border:1px solid #555"></div>
<div class="a" style="left:1471px;top:769px;width:93px;height:32px;border-radius:4px;background:#fbebe2;border:1px solid #555"></div>
<div class="t" style="left:1481px;top:778.5px;font-size:14.5px;letter-spacing:-0.2px;color:#111;font-weight:bold">Kaori Kim</div>
<div class="a" style="left:1477px;top:817px;width:159px;height:32px;border-radius:4px;background:#90ee0a;border:1px solid #555"></div>
<div class="a" style="left:1471px;top:811px;width:159px;height:32px;border-radius:4px;background:#fbebe2;border:1px solid #555"></div>
<div class="t" style="left:1480px;top:819px;font-size:15px;color:#111">Professor of Biology</div>
<svg class="i" style="left:1663px;top:746px" width="89" height="51" viewBox="0 0 89 51"><path d="M0 0H88V44L83.5 49 77 44 72 49 66 44 61 49 55 44 50 49 44 44 39 49 33 44 28 49 22 44 17 49 11 44 6 49 0 44z" fill="#2e5584"/><text x="10" y="19" font-family="Liberation Sans" font-size="7" fill="#c8d6ea">PROFESSOR</text><text x="10" y="31" font-family="Liberation Serif" font-size="11" fill="#e4ecf6">Grace Bishop</text></svg>
<div class="a" style="left:1660px;top:827px;width:95px;height:39px;border-radius:4px;background:#f3eee7"></div>
<div class="t" style="left:1666px;top:838px;font-size:9px;letter-spacing:-0.2px;color:#5d6b5e;font-family:'Liberation Serif';font-style:italic">First name, Last name</div>
<div class="t" style="left:1667px;top:849px;font-size:5px;color:#8a8a80;font-family:'Liberation Serif';font-style:italic">Job title - Company Name</div>

<div class="t" style="left:1461px;top:914.5px;font-size:17px;color:#0b57d0;-webkit-text-stroke:0.3px #0b57d0">Phrases</div>
<svg class="i" style="left:1528px;top:913px" width="20" height="20" viewBox="0 0 24 24"><path d="M12 4l-1.41 1.41L16.17 11H4v2h12.17l-5.58 5.59L12 20l8-8z" fill="#0b57d0"/></svg>
<div class="a" style="left:1442px;top:940px;width:360px;height:134px;border-radius:0 0 20px 20px;overflow:hidden">
  <div class="a" style="left:20px;top:11px;width:182px;height:142px;border-radius:14px;background:#e7ebf4"></div>
  <div class="a" style="left:209px;top:11px;width:112px;height:67px;border-radius:14px;background:#e7ebf4"></div>
  <div class="a" style="left:209px;top:86px;width:112px;height:67px;border-radius:14px;background:#e7ebf4"></div>
  <svg class="i" style="left:20px;top:11px" width="182" height="142" viewBox="0 0 182 142"><path d="M9.5 47.5 C25 50,38 55,55 54.5 C85 52,115 38,143 39 C155 40,165 43,173.3 46 V96 C160 92,150 88,135 89 C105 92,75 104,48 105 C30 105.5,18 104,9.5 104z" fill="#eefe3c"/><text x="46.5" y="63.3" font-family="Liberation Sans" font-weight="bold" font-size="43.5" fill="#1111ee" textLength="90" lengthAdjust="spacingAndGlyphs">BRAND</text><text x="62.3" y="106" font-family="Liberation Sans" font-weight="bold" font-size="43.5" fill="#1111ee" textLength="58.6" lengthAdjust="spacingAndGlyphs">NEW</text></svg>
  <svg class="i" style="left:209px;top:11px" width="112" height="67" viewBox="0 0 112 67"><path d="M11 55.4 L21 46 V9.7 H92.5 V20 L102.4 16.8 L92.5 28 V58.6 H21 V55.4z" fill="#a8e6a4"/><rect x="26" y="13.7" width="60.7" height="41.7" fill="#0e4632"/><text x="30" y="30.5" font-family="Liberation Sans" font-weight="bold" font-size="16.5" fill="#f7dfe9" textLength="35" lengthAdjust="spacingAndGlyphs">THANK</text><text x="30" y="50" font-family="Liberation Sans" font-weight="bold" font-size="16.5" fill="#f7dfe9" textLength="21" lengthAdjust="spacingAndGlyphs">YOU</text><path d="M30 51.7h21" stroke="#f7dfe9" stroke-width="1"/></svg>
  <svg class="i" style="left:209px;top:86px" width="112" height="67" viewBox="0 0 112 67"><defs><linearGradient id="wrapg" x1="0" y1="0" x2="1" y2="0"><stop offset="0" stop-color="#cfcfcf"/><stop offset=".5" stop-color="#f2f2f2"/><stop offset=".7" stop-color="#bdbdbd"/><stop offset="1" stop-color="#e8e8e8"/></linearGradient></defs><g transform="rotate(-14.6 55.6 31)"><rect x="11.6" y="22.5" width="88" height="17" fill="url(#wrapg)"/><text x="55.6" y="35" text-anchor="middle" font-family="Liberation Sans" font-size="11.5" fill="#2a2a2a" textLength="74" lengthAdjust="spacingAndGlyphs">That's a wrap</text></g></svg>
</div>

<!-- RIGHT RAIL -->
<div class="a" style="left:1815px;top:757px;width:63px;height:35px;border-radius:18px;background:#d3e3fd"></div>
<svg class="i" style="left:1836px;top:346px" width="22" height="22" viewBox="0 0 24 24"><path d="M3.5 9.5h16v9.5h-9" fill="none" stroke="#444746" stroke-width="1.9"/><path d="M3.5 9.5v9.5h3" fill="none" stroke="#444746" stroke-width="1.9"/><path d="M3 4.5h17v5H3z" fill="#444746"/><path d="M6.5 5l2 4M10.5 5l2 4M14.5 5l2 4" stroke="#f9fafd" stroke-width="1.3"/><path d="M16.5 13l1.4 3.6 3.6 1.4-3.6 1.4-1.4 3.6-1.4-3.6-3.6-1.4 3.6-1.4z" fill="#444746" stroke="#f9fafd" stroke-width="0.9"/></svg>
<div class="t" style="left:1797px;width:100px;text-align:center;top:377px;font-size:14px;color:#444746;-webkit-text-stroke:0.2px #444746">Veo</div>
<svg class="i" style="left:1836px;top:416px" width="22" height="22" viewBox="0 0 24 24"><circle cx="9" cy="6.5" r="2.7" fill="none" stroke="#444746" stroke-width="1.7"/><path d="M3 18.5c0-3 3-5 6-5 1.5 0 2.6.3 3.5.8M3 18.5h9" fill="none" stroke="#444746" stroke-width="1.7"/><path d="M18 11l1.3 3.2 3.2 1.3-3.2 1.3L18 20l-1.3-3.2-3.2-1.3 3.2-1.3z" fill="#444746"/></svg>
<div class="t" style="left:1797px;width:100px;text-align:center;top:446px;font-size:14px;color:#444746;-webkit-text-stroke:0.2px #444746">Avatars</div>
<svg class="i" style="left:1836px;top:485px" width="22" height="22" viewBox="0 0 24 24"><circle cx="12" cy="12" r="9" fill="none" stroke="#444746" stroke-width="2"/><circle cx="12" cy="12" r="5" fill="#444746"/></svg>
<div class="t" style="left:1797px;width:100px;text-align:center;top:516px;font-size:14px;color:#444746;-webkit-text-stroke:0.2px #444746">Record</div>
<svg class="i" style="left:1836px;top:555px" width="22" height="22" viewBox="0 0 24 24"><path d="M13 3H5v18h13v-8" fill="none" stroke="#444746" stroke-width="1.9"/><path d="M8 14.5h5M8 17.5h6" stroke="#444746" stroke-width="1.7"/><rect x="15.5" y="1.5" width="3.4" height="7" rx="1.7" fill="#444746"/><path d="M13.8 6.5a3.4 3.4 0 0 0 6.8 0M17.2 10v2" fill="none" stroke="#444746" stroke-width="1.5"/></svg>
<div class="t" style="left:1797px;width:100px;text-align:center;top:586px;font-size:14px;color:#444746;-webkit-text-stroke:0.2px #444746">Scripts</div>
<svg class="i" style="left:1836px;top:625px" width="22" height="22" viewBox="0 0 24 24"><path d="M20 6h-8l-2-2H4c-1.1 0-1.99.9-1.99 2L2 18c0 1.1.9 2 2 2h16c1.1 0 2-.9 2-2V8c0-1.1-.9-2-2-2zm0 12H4V6h5.17l2 2H20v10z" fill="#444746"/></svg>
<div class="t" style="left:1797px;width:100px;text-align:center;top:656px;font-size:14px;color:#444746;-webkit-text-stroke:0.2px #444746">Uploads</div>
<svg class="i" style="left:1836px;top:694px" width="22" height="22" viewBox="0 0 24 24"><path d="M12 4H4v16h16v-6" fill="none" stroke="#444746" stroke-width="1.8"/><path d="M6 17l3.5-4.5 2.5 3 2-2.5 3 4z" fill="#444746"/><circle cx="17" cy="6" r="2.6" fill="none" stroke="#444746" stroke-width="1.6"/><path d="M19 8l2.5 2.5" stroke="#444746" stroke-width="1.6"/></svg>
<div class="t" style="left:1797px;width:100px;text-align:center;top:725px;font-size:14px;color:#444746;-webkit-text-stroke:0.2px #444746">Stock</div>
<svg class="i" style="left:1836px;top:764px" width="22" height="22" viewBox="0 0 24 24"><path d="M2.5 4v3h5v12h3V7h5V4h-13zm19 5h-9v3h3v7h3v-7h3V9z" fill="#0b1e4a"/></svg>
<div class="t" style="left:1797px;width:100px;text-align:center;top:795px;font-size:14px;color:#444746;-webkit-text-stroke:0.2px #444746">Text</div>
<svg class="i" style="left:1836px;top:834px" width="22" height="22" viewBox="0 0 24 24"><circle cx="9" cy="9" r="5.5" fill="none" stroke="#444746" stroke-width="1.8"/><path d="M13.5 11H20v9H11v-5.5" fill="none" stroke="#444746" stroke-width="1.8"/></svg>
<div class="t" style="left:1797px;width:100px;text-align:center;top:865px;font-size:14px;color:#444746;-webkit-text-stroke:0.2px #444746">Shapes</div>
<svg class="i" style="left:1836px;top:903px" width="22" height="22" viewBox="0 0 24 24"><rect x="3" y="5" width="18" height="14" rx="1.5" fill="none" stroke="#444746" stroke-width="1.8"/><path d="M6 10h6M6 14h6" stroke="#444746" stroke-width="1.8"/><rect x="14" y="9" width="4" height="6" fill="#444746"/></svg>
<div class="t" style="left:1797px;width:100px;text-align:center;top:935px;font-size:14px;color:#444746;-webkit-text-stroke:0.2px #444746">Templates</div>
</body></html>
